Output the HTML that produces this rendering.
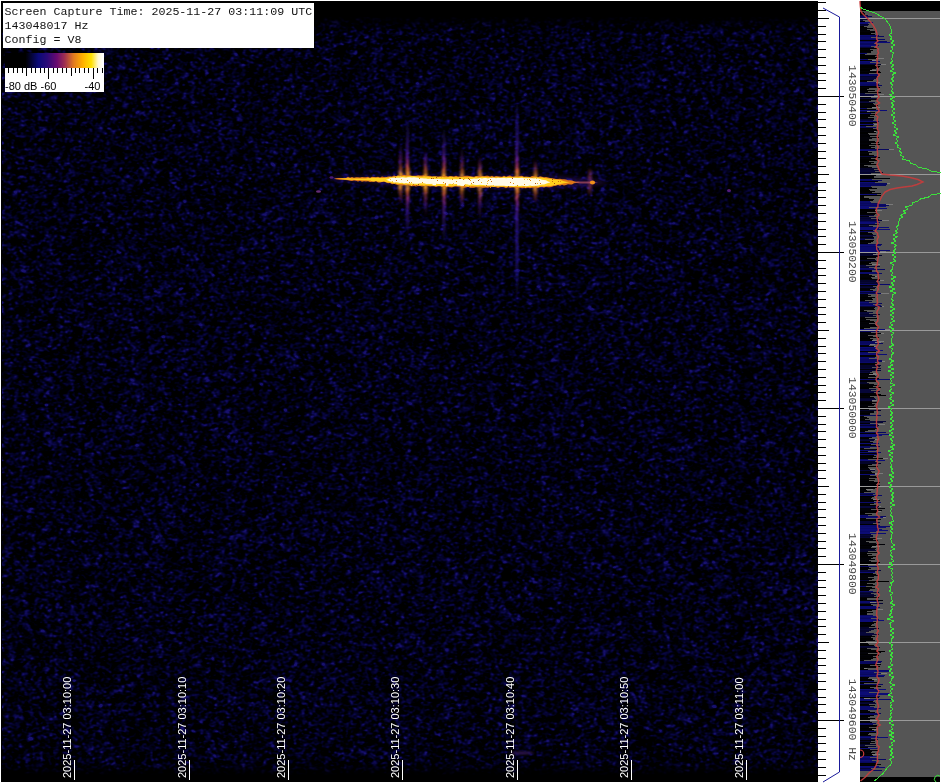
<!DOCTYPE html>
<html><head><meta charset="utf-8"><style>
html,body{margin:0;padding:0;background:#fff;width:941px;height:783px;overflow:hidden;position:relative}
</style></head><body>
<svg width="941" height="783" viewBox="0 0 941 783" style="position:absolute;left:0;top:0" shape-rendering="crispEdges">
<defs>
<filter id="nz" x="2" y="17" width="816" height="758" filterUnits="userSpaceOnUse" color-interpolation-filters="sRGB">
<feTurbulence type="fractalNoise" baseFrequency="0.24 0.3" numOctaves="1" seed="11" result="t"/>
<feColorMatrix type="matrix" in="t" values="1 0 0 0 0  1 0 0 0 0  1 0 0 0 0  0 0 0 0 1" result="a"/>
<feComponentTransfer in="a">
 <feFuncR type="linear" slope="0.14" intercept="-0.068"/>
 <feFuncG type="linear" slope="0.08" intercept="-0.04"/>
 <feFuncB type="linear" slope="1.5" intercept="-0.70"/>
 <feFuncA type="linear" slope="0" intercept="1"/>
</feComponentTransfer>
</filter>
<filter id="bl1" x="-50%" y="-50%" width="200%" height="200%"><feGaussianBlur stdDeviation="1"/></filter>
<filter id="bl2" x="-50%" y="-50%" width="200%" height="200%"><feGaussianBlur stdDeviation="2"/></filter>
<filter id="bl08" x="-10%" y="-10%" width="120%" height="120%"><feGaussianBlur stdDeviation="0.8"/></filter>
<filter id="bl05" x="-50%" y="-50%" width="200%" height="200%"><feGaussianBlur stdDeviation="0.6"/></filter>
<linearGradient id="cbar" x1="0" x2="1" y1="0" y2="0">
 <stop offset="0" stop-color="#000"/>
 <stop offset="0.21" stop-color="#000"/>
 <stop offset="0.34" stop-color="#0a0a78"/>
 <stop offset="0.43" stop-color="#2a0a78"/>
 <stop offset="0.53" stop-color="#6a0a70"/>
 <stop offset="0.61" stop-color="#a03050"/>
 <stop offset="0.70" stop-color="#e07a20"/>
 <stop offset="0.79" stop-color="#ffae00"/>
 <stop offset="0.88" stop-color="#ffe000"/>
 <stop offset="0.95" stop-color="#fff8d0"/>
 <stop offset="1" stop-color="#fff"/>
</linearGradient>

</defs>
<rect x="1" y="1" width="939" height="781" fill="#000"/>
<rect x="2" y="17" width="816" height="758" fill="#000" filter="url(#nz)"/>
</svg>
<canvas id="wf" width="816" height="758" style="position:absolute;left:2px;top:17px"></canvas>
<script>(function(){
var c=document.getElementById('wf');if(!c||!c.getContext)return;
var W=c.width,H=c.height,g=c.getContext('2d');
var im=g.createImageData(W,H),d=im.data,N=W*H;
var s=987654321;function R(){s^=s<<13;s^=s>>>17;s^=s<<5;return ((s>>>0)%1000000)/1000000;}
function K(sg){var r=Math.ceil(sg*2.5),k=[],t=0;for(var i=-r;i<=r;i++){var v=Math.exp(-i*i/(2*sg*sg));k.push(v);t+=v;}for(i=0;i<k.length;i++)k[i]/=t;return k;}
var a=new Float32Array(N),b=new Float32Array(N),i,x,y,k;
for(i=0;i<N;i++){a[i]=-Math.log(1-R()*0.999999);}
var KX=K(1.2),KY=K(0.9),rx=(KX.length-1)/2,ry=(KY.length-1)/2;
for(y=0;y<H;y++){var o=y*W;for(x=0;x<W;x++){var t=0;for(k=-rx;k<=rx;k++){var xx=x+k;if(xx<0)xx=0;if(xx>=W)xx=W-1;t+=KX[k+rx]*a[o+xx];}b[o+x]=t;}}
for(y=0;y<H;y++){var o2=y*W;for(x=0;x<W;x++){var t2=0;for(k=-ry;k<=ry;k++){var yy=y+k;if(yy<0)yy=0;if(yy>=H)yy=H-1;t2+=KY[k+ry]*b[yy*W+x];}a[o2+x]=t2;}}
var LO=0.8,HI=1.9;
for(i=0;i<N;i++){var v=(a[i]-LO)/(HI-LO);if(v<0)v=0;if(v>1.1)v=1.1;
var j=i*4;d[j]=Math.min(255,v*v*20);d[j+1]=Math.min(255,v*v*14);d[j+2]=Math.min(255,v*100);d[j+3]=255;}
g.putImageData(im,0,0);
})();
</script>
<svg width="941" height="783" viewBox="0 0 941 783" style="position:absolute;left:0;top:0" shape-rendering="crispEdges">
<defs><linearGradient id="topfade" x1="0" x2="0" y1="0" y2="1"><stop offset="0" stop-color="#000" stop-opacity="1"/><stop offset="1" stop-color="#000" stop-opacity="0"/></linearGradient></defs>
<rect x="2" y="16" width="816" height="16" fill="url(#topfade)"/>
<rect x="2" y="762" width="816" height="13" fill="url(#topfade)" transform="translate(0,1537) scale(1,-1)"/>
<g shape-rendering="auto">
<path d="M325,178.60 L327,178.27 L329,177.93 L331,177.62 L333,177.33 L335,177.04 L337,176.75 L339,176.71 L341,176.66 L343,176.62 L345,176.58 L347,176.53 L349,176.49 L351,176.44 L353,176.40 L355,176.36 L357,176.31 L359,176.27 L361,176.19 L363,176.09 L365,175.98 L367,175.87 L369,175.76 L371,175.66 L373,175.55 L375,175.44 L377,175.34 L379,175.23 L381,175.12 L383,175.02 L385,174.91 L387,174.80 L389,174.70 L391,174.59 L393,174.48 L395,174.38 L397,174.29 L399,174.21 L401,174.19 L403,174.24 L405,174.29 L407,174.34 L409,174.39 L411,174.44 L413,174.49 L415,174.54 L417,174.59 L419,174.64 L421,174.69 L423,174.74 L425,174.79 L427,174.84 L429,174.89 L431,174.94 L433,174.99 L435,175.04 L437,175.09 L439,175.14 L441,175.16 L443,175.16 L445,175.16 L447,175.15 L449,175.15 L451,175.14 L453,175.14 L455,175.14 L457,175.13 L459,175.13 L461,175.12 L463,175.12 L465,175.11 L467,175.11 L469,175.11 L471,175.10 L473,175.10 L475,175.09 L477,175.09 L479,175.09 L481,175.08 L483,175.08 L485,175.07 L487,175.07 L489,175.06 L491,175.06 L493,175.06 L495,175.05 L497,175.05 L499,175.04 L501,175.04 L503,175.04 L505,175.03 L507,175.03 L509,175.02 L511,175.02 L513,175.01 L515,175.01 L517,175.01 L519,175.00 L521,175.03 L523,175.09 L525,175.16 L527,175.22 L529,175.28 L531,175.34 L533,175.41 L535,175.47 L537,175.53 L539,175.59 L541,175.66 L543,175.72 L545,175.78 L547,175.84 L549,175.91 L551,175.97 L553,176.03 L555,176.09 L557,176.16 L559,176.22 L561,176.34 L563,176.52 L565,176.70 L567,176.88 L569,177.06 L571,177.24 L573,177.41 L575,177.59 L577,177.77 L579,177.95 L581,178.13 L583,178.31 L585,178.49 L587,178.67 L589,178.85 L591,179.03 L593,179.21 L595,179.39 L597,179.70 L599,180.14 L601,180.57 L603,181.00 L605,181.43 L607,181.86 L609,182.29 L609,182.71 L607,183.14 L605,183.57 L603,184.00 L601,184.43 L599,184.85 L597,185.27 L595,185.55 L593,185.71 L591,185.86 L589,186.01 L587,186.17 L585,186.32 L583,186.48 L581,186.63 L579,186.79 L577,186.94 L575,187.09 L573,187.25 L571,187.40 L569,187.56 L567,187.71 L565,187.86 L563,188.02 L561,188.17 L559,188.27 L557,188.31 L555,188.34 L553,188.38 L551,188.42 L549,188.46 L547,188.49 L545,188.53 L543,188.57 L541,188.61 L539,188.64 L537,188.68 L535,188.72 L533,188.76 L531,188.79 L529,188.83 L527,188.87 L525,188.91 L523,188.94 L521,188.98 L519,188.99 L517,188.96 L515,188.93 L513,188.90 L511,188.87 L509,188.84 L507,188.81 L505,188.78 L503,188.75 L501,188.72 L499,188.69 L497,188.66 L495,188.64 L493,188.61 L491,188.58 L489,188.55 L487,188.52 L485,188.49 L483,188.46 L481,188.43 L479,188.40 L477,188.37 L475,188.34 L473,188.31 L471,188.29 L469,188.26 L467,188.23 L465,188.20 L463,188.17 L461,188.14 L459,188.11 L457,188.08 L455,188.05 L453,188.02 L451,187.99 L449,187.96 L447,187.94 L445,187.91 L443,187.88 L441,187.85 L439,187.79 L437,187.71 L435,187.62 L433,187.54 L431,187.46 L429,187.38 L427,187.29 L425,187.21 L423,187.12 L421,187.04 L419,186.96 L417,186.88 L415,186.79 L413,186.71 L411,186.62 L409,186.54 L407,186.46 L405,186.38 L403,186.29 L401,186.21 L399,186.06 L397,185.84 L395,185.62 L393,185.43 L391,185.24 L389,185.05 L387,184.85 L385,184.66 L383,184.47 L381,184.27 L379,184.08 L377,183.89 L375,183.69 L373,183.50 L371,183.31 L369,183.12 L367,182.92 L365,182.73 L363,182.54 L361,182.34 L359,182.18 L357,182.05 L355,181.92 L353,181.79 L351,181.66 L349,181.53 L347,181.40 L345,181.27 L343,181.14 L341,181.01 L339,180.88 L337,180.75 L335,180.37 L333,180.00 L331,179.62 L329,179.27 L327,178.93 L325,178.60Z" fill="#4a1a90" opacity="0.35" filter="url(#bl2)"/>
<g filter="url(#bl08)"><rect x="399.2" y="143" width="2.5" height="2" fill="rgb(77,33,175)" opacity="0.05"/><rect x="399.3" y="145" width="2.5" height="2" fill="rgb(81,33,174)" opacity="0.13"/><rect x="399.4" y="147" width="2.5" height="2" fill="rgb(85,33,172)" opacity="0.20"/><rect x="399.3" y="149" width="2.5" height="2" fill="rgb(89,33,171)" opacity="0.26"/><rect x="399.6" y="151" width="2.5" height="2" fill="rgb(93,34,170)" opacity="0.32"/><rect x="399.6" y="153" width="2.5" height="2" fill="rgb(98,34,169)" opacity="0.40"/><rect x="398.8" y="155" width="3.0" height="2" fill="rgb(107,36,165)" opacity="0.49"/><rect x="399.4" y="157" width="3.0" height="2" fill="rgb(124,40,158)" opacity="0.46"/><rect x="398.7" y="159" width="3.0" height="2" fill="rgb(141,44,151)" opacity="0.55"/><rect x="399.0" y="161" width="3.0" height="2" fill="rgb(158,48,145)" opacity="0.42"/><rect x="398.8" y="163" width="3.0" height="2" fill="rgb(179,63,120)" opacity="0.43"/><rect x="399.1" y="165" width="3.0" height="2" fill="rgb(201,79,93)" opacity="0.44"/><rect x="399.3" y="167" width="3.0" height="2" fill="rgb(222,95,66)" opacity="0.62"/><rect x="398.7" y="169" width="4.0" height="2" fill="rgb(231,115,54)" opacity="0.48"/><rect x="398.2" y="171" width="4.0" height="2" fill="rgb(239,137,44)" opacity="0.60"/><rect x="398.9" y="173" width="4.0" height="2" fill="rgb(247,158,33)" opacity="0.95"/><rect x="398.9" y="175" width="4.0" height="2" fill="rgb(250,172,39)" opacity="0.73"/><rect x="398.5" y="177" width="4.0" height="2" fill="rgb(252,185,47)" opacity="0.79"/><rect x="398.8" y="179" width="4.0" height="2" fill="rgb(255,199,55)" opacity="1.00"/><rect x="398.4" y="181" width="4.0" height="2" fill="rgb(253,188,49)" opacity="0.71"/><rect x="398.4" y="183" width="4.0" height="2" fill="rgb(251,175,41)" opacity="0.83"/><rect x="398.4" y="185" width="4.0" height="2" fill="rgb(248,161,33)" opacity="0.71"/><rect x="398.1" y="187" width="4.0" height="2" fill="rgb(241,141,42)" opacity="0.87"/><rect x="398.5" y="189" width="4.0" height="2" fill="rgb(233,119,52)" opacity="0.55"/><rect x="398.4" y="191" width="4.0" height="2" fill="rgb(225,98,63)" opacity="0.40"/><rect x="399.0" y="193" width="3.0" height="2" fill="rgb(205,81,88)" opacity="0.50"/><rect x="399.4" y="195" width="3.0" height="2" fill="rgb(183,65,115)" opacity="0.34"/><rect x="399.4" y="197" width="3.0" height="2" fill="rgb(162,49,142)" opacity="0.40"/><rect x="398.8" y="199" width="3.0" height="2" fill="rgb(144,44,150)" opacity="0.23"/><rect x="399.2" y="201" width="3.0" height="2" fill="rgb(127,40,157)" opacity="0.15"/><rect x="398.7" y="203" width="3.0" height="2" fill="rgb(110,36,164)" opacity="0.06"/><rect x="406.6" y="118" width="2.5" height="2" fill="rgb(54,32,176)" opacity="0.03"/><rect x="406.1" y="120" width="2.5" height="2" fill="rgb(55,32,176)" opacity="0.12"/><rect x="406.6" y="122" width="2.5" height="2" fill="rgb(55,32,177)" opacity="0.14"/><rect x="406.4" y="124" width="2.5" height="2" fill="rgb(56,32,177)" opacity="0.23"/><rect x="405.9" y="126" width="2.5" height="2" fill="rgb(56,32,178)" opacity="0.23"/><rect x="406.2" y="128" width="2.5" height="2" fill="rgb(57,32,178)" opacity="0.36"/><rect x="406.6" y="130" width="2.5" height="2" fill="rgb(57,32,179)" opacity="0.31"/><rect x="406.5" y="132" width="2.5" height="2" fill="rgb(57,32,179)" opacity="0.45"/><rect x="406.5" y="134" width="2.5" height="2" fill="rgb(58,32,180)" opacity="0.39"/><rect x="406.5" y="136" width="2.5" height="2" fill="rgb(61,32,179)" opacity="0.42"/><rect x="406.1" y="138" width="2.5" height="2" fill="rgb(66,32,178)" opacity="0.54"/><rect x="406.6" y="140" width="2.5" height="2" fill="rgb(70,33,177)" opacity="0.59"/><rect x="406.0" y="142" width="2.5" height="2" fill="rgb(74,33,175)" opacity="0.55"/><rect x="406.0" y="144" width="2.5" height="2" fill="rgb(78,33,174)" opacity="0.65"/><rect x="406.0" y="146" width="2.5" height="2" fill="rgb(82,33,173)" opacity="0.56"/><rect x="406.0" y="148" width="2.5" height="2" fill="rgb(87,33,172)" opacity="0.56"/><rect x="406.1" y="150" width="2.5" height="2" fill="rgb(91,34,171)" opacity="0.66"/><rect x="406.1" y="152" width="2.5" height="2" fill="rgb(95,34,169)" opacity="0.81"/><rect x="406.0" y="154" width="2.5" height="2" fill="rgb(99,34,168)" opacity="0.75"/><rect x="405.6" y="156" width="3.0" height="2" fill="rgb(114,37,163)" opacity="0.71"/><rect x="405.6" y="158" width="3.0" height="2" fill="rgb(131,41,156)" opacity="0.69"/><rect x="406.0" y="160" width="3.0" height="2" fill="rgb(148,45,149)" opacity="0.86"/><rect x="406.0" y="162" width="3.0" height="2" fill="rgb(166,53,136)" opacity="0.68"/><rect x="405.7" y="164" width="3.0" height="2" fill="rgb(188,69,110)" opacity="0.94"/><rect x="405.9" y="166" width="3.0" height="2" fill="rgb(209,85,83)" opacity="0.91"/><rect x="405.8" y="168" width="4.0" height="2" fill="rgb(226,102,61)" opacity="0.80"/><rect x="405.5" y="170" width="4.0" height="2" fill="rgb(234,124,50)" opacity="0.77"/><rect x="405.9" y="172" width="4.0" height="2" fill="rgb(242,145,40)" opacity="0.89"/><rect x="405.8" y="174" width="4.0" height="2" fill="rgb(249,164,34)" opacity="0.77"/><rect x="405.6" y="176" width="4.0" height="2" fill="rgb(251,177,42)" opacity="0.90"/><rect x="405.4" y="178" width="4.0" height="2" fill="rgb(253,191,50)" opacity="0.79"/><rect x="405.2" y="180" width="4.0" height="2" fill="rgb(254,196,54)" opacity="0.67"/><rect x="405.7" y="182" width="4.0" height="2" fill="rgb(252,183,46)" opacity="0.67"/><rect x="405.2" y="184" width="4.0" height="2" fill="rgb(250,169,38)" opacity="0.74"/><rect x="405.8" y="186" width="4.0" height="2" fill="rgb(246,154,35)" opacity="0.68"/><rect x="405.6" y="188" width="4.0" height="2" fill="rgb(238,132,46)" opacity="0.93"/><rect x="405.3" y="190" width="4.0" height="2" fill="rgb(230,111,56)" opacity="0.73"/><rect x="406.0" y="192" width="3.0" height="2" fill="rgb(218,91,72)" opacity="0.73"/><rect x="406.0" y="194" width="3.0" height="2" fill="rgb(196,75,98)" opacity="0.68"/><rect x="406.4" y="196" width="3.0" height="2" fill="rgb(175,59,125)" opacity="0.71"/><rect x="406.0" y="198" width="3.0" height="2" fill="rgb(155,47,146)" opacity="0.93"/><rect x="406.4" y="200" width="3.0" height="2" fill="rgb(138,43,153)" opacity="0.68"/><rect x="405.9" y="202" width="3.0" height="2" fill="rgb(121,39,160)" opacity="0.69"/><rect x="405.9" y="204" width="3.0" height="2" fill="rgb(104,35,167)" opacity="0.58"/><rect x="406.3" y="206" width="2.5" height="2" fill="rgb(97,34,169)" opacity="0.70"/><rect x="406.3" y="208" width="2.5" height="2" fill="rgb(92,34,170)" opacity="0.60"/><rect x="406.1" y="210" width="2.5" height="2" fill="rgb(88,33,171)" opacity="0.52"/><rect x="406.2" y="212" width="2.5" height="2" fill="rgb(84,33,173)" opacity="0.51"/><rect x="405.9" y="214" width="2.5" height="2" fill="rgb(80,33,174)" opacity="0.47"/><rect x="406.0" y="216" width="2.5" height="2" fill="rgb(76,33,175)" opacity="0.50"/><rect x="406.3" y="218" width="2.5" height="2" fill="rgb(71,33,176)" opacity="0.52"/><rect x="406.4" y="220" width="2.5" height="2" fill="rgb(67,32,177)" opacity="0.50"/><rect x="406.6" y="222" width="2.5" height="2" fill="rgb(63,32,179)" opacity="0.44"/><rect x="406.1" y="224" width="2.5" height="2" fill="rgb(59,32,180)" opacity="0.33"/><rect x="406.0" y="226" width="2.5" height="2" fill="rgb(58,32,180)" opacity="0.35"/><rect x="406.4" y="228" width="2.5" height="2" fill="rgb(57,32,179)" opacity="0.25"/><rect x="406.5" y="230" width="2.5" height="2" fill="rgb(57,32,179)" opacity="0.12"/><rect x="406.4" y="232" width="2.5" height="2" fill="rgb(56,32,178)" opacity="0.09"/><rect x="424.0" y="150" width="2.5" height="2" fill="rgb(89,33,171)" opacity="0.06"/><rect x="424.3" y="152" width="2.5" height="2" fill="rgb(94,34,170)" opacity="0.16"/><rect x="424.5" y="154" width="2.5" height="2" fill="rgb(98,34,169)" opacity="0.29"/><rect x="424.1" y="156" width="3.0" height="2" fill="rgb(108,36,165)" opacity="0.38"/><rect x="424.1" y="158" width="3.0" height="2" fill="rgb(126,40,158)" opacity="0.46"/><rect x="423.8" y="160" width="3.0" height="2" fill="rgb(143,44,151)" opacity="0.49"/><rect x="423.7" y="162" width="3.0" height="2" fill="rgb(160,48,144)" opacity="0.40"/><rect x="423.7" y="164" width="3.0" height="2" fill="rgb(181,64,118)" opacity="0.50"/><rect x="424.0" y="166" width="3.0" height="2" fill="rgb(202,80,91)" opacity="0.64"/><rect x="424.1" y="168" width="3.0" height="2" fill="rgb(224,96,64)" opacity="0.61"/><rect x="423.5" y="170" width="4.0" height="2" fill="rgb(232,117,53)" opacity="0.64"/><rect x="423.7" y="172" width="4.0" height="2" fill="rgb(240,138,43)" opacity="0.48"/><rect x="423.5" y="174" width="4.0" height="2" fill="rgb(248,160,32)" opacity="0.91"/><rect x="423.6" y="176" width="4.0" height="2" fill="rgb(250,173,40)" opacity="0.84"/><rect x="423.7" y="178" width="4.0" height="2" fill="rgb(253,187,48)" opacity="0.67"/><rect x="423.2" y="180" width="4.0" height="2" fill="rgb(255,200,56)" opacity="0.74"/><rect x="423.7" y="182" width="4.0" height="2" fill="rgb(253,187,48)" opacity="0.74"/><rect x="423.7" y="184" width="4.0" height="2" fill="rgb(250,173,40)" opacity="0.72"/><rect x="423.5" y="186" width="4.0" height="2" fill="rgb(248,160,32)" opacity="0.99"/><rect x="423.5" y="188" width="4.0" height="2" fill="rgb(240,139,43)" opacity="0.77"/><rect x="423.7" y="190" width="4.0" height="2" fill="rgb(232,118,53)" opacity="0.65"/><rect x="423.6" y="192" width="4.0" height="2" fill="rgb(224,96,64)" opacity="0.62"/><rect x="423.7" y="194" width="3.0" height="2" fill="rgb(203,80,90)" opacity="0.47"/><rect x="424.2" y="196" width="3.0" height="2" fill="rgb(182,64,117)" opacity="0.50"/><rect x="424.1" y="198" width="3.0" height="2" fill="rgb(160,48,144)" opacity="0.49"/><rect x="423.6" y="200" width="3.0" height="2" fill="rgb(143,44,151)" opacity="0.40"/><rect x="424.1" y="202" width="3.0" height="2" fill="rgb(126,40,158)" opacity="0.42"/><rect x="424.1" y="204" width="3.0" height="2" fill="rgb(109,36,165)" opacity="0.45"/><rect x="424.3" y="206" width="2.5" height="2" fill="rgb(98,34,169)" opacity="0.33"/><rect x="424.2" y="208" width="2.5" height="2" fill="rgb(94,34,170)" opacity="0.29"/><rect x="424.6" y="210" width="2.5" height="2" fill="rgb(90,34,171)" opacity="0.19"/><rect x="424.6" y="212" width="2.5" height="2" fill="rgb(85,33,172)" opacity="0.12"/><rect x="423.9" y="214" width="2.5" height="2" fill="rgb(81,33,173)" opacity="0.06"/><rect x="443.0" y="128" width="2.5" height="2" fill="rgb(56,32,178)" opacity="0.04"/><rect x="442.7" y="130" width="2.5" height="2" fill="rgb(57,32,179)" opacity="0.14"/><rect x="442.5" y="132" width="2.5" height="2" fill="rgb(57,32,179)" opacity="0.17"/><rect x="442.5" y="134" width="2.5" height="2" fill="rgb(58,32,180)" opacity="0.31"/><rect x="442.5" y="136" width="2.5" height="2" fill="rgb(59,32,180)" opacity="0.34"/><rect x="443.1" y="138" width="2.5" height="2" fill="rgb(63,32,179)" opacity="0.39"/><rect x="443.0" y="140" width="2.5" height="2" fill="rgb(67,32,177)" opacity="0.37"/><rect x="443.1" y="142" width="2.5" height="2" fill="rgb(72,33,176)" opacity="0.49"/><rect x="442.5" y="144" width="2.5" height="2" fill="rgb(76,33,175)" opacity="0.58"/><rect x="442.7" y="146" width="2.5" height="2" fill="rgb(80,33,174)" opacity="0.67"/><rect x="442.4" y="148" width="2.5" height="2" fill="rgb(84,33,173)" opacity="0.49"/><rect x="442.7" y="150" width="2.5" height="2" fill="rgb(88,33,171)" opacity="0.65"/><rect x="442.5" y="152" width="2.5" height="2" fill="rgb(93,34,170)" opacity="0.62"/><rect x="442.6" y="154" width="2.5" height="2" fill="rgb(97,34,169)" opacity="0.66"/><rect x="442.1" y="156" width="3.0" height="2" fill="rgb(104,35,166)" opacity="0.83"/><rect x="442.8" y="158" width="3.0" height="2" fill="rgb(121,39,160)" opacity="0.83"/><rect x="442.8" y="160" width="3.0" height="2" fill="rgb(138,43,153)" opacity="0.64"/><rect x="442.8" y="162" width="3.0" height="2" fill="rgb(155,47,146)" opacity="0.84"/><rect x="442.4" y="164" width="3.0" height="2" fill="rgb(176,60,124)" opacity="0.71"/><rect x="442.9" y="166" width="3.0" height="2" fill="rgb(197,76,98)" opacity="0.75"/><rect x="442.4" y="168" width="3.0" height="2" fill="rgb(218,92,71)" opacity="0.83"/><rect x="441.8" y="170" width="4.0" height="2" fill="rgb(230,112,56)" opacity="0.78"/><rect x="441.7" y="172" width="4.0" height="2" fill="rgb(238,133,45)" opacity="0.65"/><rect x="441.8" y="174" width="4.0" height="2" fill="rgb(246,154,35)" opacity="0.94"/><rect x="441.8" y="176" width="4.0" height="2" fill="rgb(250,170,38)" opacity="0.98"/><rect x="442.0" y="178" width="4.0" height="2" fill="rgb(252,183,46)" opacity="0.74"/><rect x="441.9" y="180" width="4.0" height="2" fill="rgb(254,196,54)" opacity="0.72"/><rect x="442.3" y="182" width="4.0" height="2" fill="rgb(253,190,50)" opacity="0.98"/><rect x="442.1" y="184" width="4.0" height="2" fill="rgb(251,177,42)" opacity="0.93"/><rect x="442.4" y="186" width="4.0" height="2" fill="rgb(249,164,34)" opacity="0.97"/><rect x="442.2" y="188" width="4.0" height="2" fill="rgb(242,144,40)" opacity="0.84"/><rect x="442.2" y="190" width="4.0" height="2" fill="rgb(234,123,51)" opacity="0.65"/><rect x="442.2" y="192" width="4.0" height="2" fill="rgb(226,102,61)" opacity="0.78"/><rect x="442.3" y="194" width="3.0" height="2" fill="rgb(208,84,84)" opacity="0.85"/><rect x="442.8" y="196" width="3.0" height="2" fill="rgb(187,68,110)" opacity="0.64"/><rect x="442.5" y="198" width="3.0" height="2" fill="rgb(166,52,137)" opacity="0.66"/><rect x="442.3" y="200" width="3.0" height="2" fill="rgb(147,45,149)" opacity="0.73"/><rect x="442.9" y="202" width="3.0" height="2" fill="rgb(130,41,156)" opacity="0.85"/><rect x="442.6" y="204" width="3.0" height="2" fill="rgb(113,37,163)" opacity="0.68"/><rect x="442.8" y="206" width="2.5" height="2" fill="rgb(99,34,168)" opacity="0.68"/><rect x="442.5" y="208" width="2.5" height="2" fill="rgb(95,34,169)" opacity="0.70"/><rect x="442.5" y="210" width="2.5" height="2" fill="rgb(91,34,171)" opacity="0.61"/><rect x="442.7" y="212" width="2.5" height="2" fill="rgb(86,33,172)" opacity="0.81"/><rect x="443.1" y="214" width="2.5" height="2" fill="rgb(82,33,173)" opacity="0.58"/><rect x="442.7" y="216" width="2.5" height="2" fill="rgb(78,33,174)" opacity="0.77"/><rect x="442.5" y="218" width="2.5" height="2" fill="rgb(74,33,175)" opacity="0.51"/><rect x="442.6" y="220" width="2.5" height="2" fill="rgb(70,33,177)" opacity="0.47"/><rect x="442.5" y="222" width="2.5" height="2" fill="rgb(65,32,178)" opacity="0.44"/><rect x="442.8" y="224" width="2.5" height="2" fill="rgb(61,32,179)" opacity="0.45"/><rect x="442.9" y="226" width="2.5" height="2" fill="rgb(58,32,180)" opacity="0.53"/><rect x="442.7" y="228" width="2.5" height="2" fill="rgb(57,32,179)" opacity="0.40"/><rect x="442.7" y="230" width="2.5" height="2" fill="rgb(57,32,179)" opacity="0.37"/><rect x="442.4" y="232" width="2.5" height="2" fill="rgb(57,32,178)" opacity="0.29"/><rect x="443.1" y="234" width="2.5" height="2" fill="rgb(56,32,178)" opacity="0.23"/><rect x="442.8" y="236" width="2.5" height="2" fill="rgb(56,32,177)" opacity="0.17"/><rect x="443.0" y="238" width="2.5" height="2" fill="rgb(55,32,177)" opacity="0.14"/><rect x="442.6" y="240" width="2.5" height="2" fill="rgb(55,32,176)" opacity="0.06"/><rect x="460.7" y="148" width="2.5" height="2" fill="rgb(84,33,173)" opacity="0.04"/><rect x="461.0" y="150" width="2.5" height="2" fill="rgb(88,33,171)" opacity="0.15"/><rect x="460.4" y="152" width="2.5" height="2" fill="rgb(92,34,170)" opacity="0.23"/><rect x="460.9" y="154" width="2.5" height="2" fill="rgb(97,34,169)" opacity="0.21"/><rect x="460.5" y="156" width="3.0" height="2" fill="rgb(103,35,167)" opacity="0.37"/><rect x="460.1" y="158" width="3.0" height="2" fill="rgb(120,39,160)" opacity="0.38"/><rect x="460.8" y="160" width="3.0" height="2" fill="rgb(137,43,153)" opacity="0.38"/><rect x="460.8" y="162" width="3.0" height="2" fill="rgb(155,47,146)" opacity="0.49"/><rect x="460.3" y="164" width="3.0" height="2" fill="rgb(175,59,126)" opacity="0.55"/><rect x="460.2" y="166" width="3.0" height="2" fill="rgb(196,75,99)" opacity="0.40"/><rect x="460.6" y="168" width="3.0" height="2" fill="rgb(217,91,72)" opacity="0.50"/><rect x="460.2" y="170" width="4.0" height="2" fill="rgb(229,111,57)" opacity="0.60"/><rect x="460.2" y="172" width="4.0" height="2" fill="rgb(237,132,46)" opacity="0.55"/><rect x="460.0" y="174" width="4.0" height="2" fill="rgb(245,153,35)" opacity="0.80"/><rect x="460.2" y="176" width="4.0" height="2" fill="rgb(250,169,37)" opacity="0.66"/><rect x="460.3" y="178" width="4.0" height="2" fill="rgb(252,182,45)" opacity="0.73"/><rect x="459.8" y="180" width="4.0" height="2" fill="rgb(254,196,53)" opacity="0.88"/><rect x="459.8" y="182" width="4.0" height="2" fill="rgb(253,191,51)" opacity="0.69"/><rect x="460.2" y="184" width="4.0" height="2" fill="rgb(251,178,43)" opacity="0.87"/><rect x="459.7" y="186" width="4.0" height="2" fill="rgb(249,164,35)" opacity="0.68"/><rect x="460.1" y="188" width="4.0" height="2" fill="rgb(243,145,39)" opacity="0.82"/><rect x="459.8" y="190" width="4.0" height="2" fill="rgb(235,124,50)" opacity="0.47"/><rect x="459.6" y="192" width="4.0" height="2" fill="rgb(227,103,61)" opacity="0.50"/><rect x="460.5" y="194" width="3.0" height="2" fill="rgb(209,85,82)" opacity="0.42"/><rect x="460.6" y="196" width="3.0" height="2" fill="rgb(188,69,109)" opacity="0.50"/><rect x="460.5" y="198" width="3.0" height="2" fill="rgb(167,53,136)" opacity="0.43"/><rect x="460.3" y="200" width="3.0" height="2" fill="rgb(148,45,149)" opacity="0.28"/><rect x="460.7" y="202" width="3.0" height="2" fill="rgb(131,41,156)" opacity="0.29"/><rect x="460.1" y="204" width="3.0" height="2" fill="rgb(114,37,162)" opacity="0.15"/><rect x="460.9" y="206" width="2.5" height="2" fill="rgb(99,34,168)" opacity="0.06"/><rect x="478.3" y="156" width="3.0" height="2" fill="rgb(102,34,167)" opacity="0.06"/><rect x="478.8" y="158" width="3.0" height="2" fill="rgb(119,38,160)" opacity="0.19"/><rect x="478.1" y="160" width="3.0" height="2" fill="rgb(136,42,153)" opacity="0.24"/><rect x="478.4" y="162" width="3.0" height="2" fill="rgb(154,46,147)" opacity="0.33"/><rect x="478.3" y="164" width="3.0" height="2" fill="rgb(173,58,127)" opacity="0.44"/><rect x="478.7" y="166" width="3.0" height="2" fill="rgb(195,74,101)" opacity="0.52"/><rect x="478.3" y="168" width="3.0" height="2" fill="rgb(216,90,74)" opacity="0.50"/><rect x="477.8" y="170" width="4.0" height="2" fill="rgb(229,109,57)" opacity="0.63"/><rect x="477.8" y="172" width="4.0" height="2" fill="rgb(237,131,47)" opacity="0.62"/><rect x="478.2" y="174" width="4.0" height="2" fill="rgb(245,152,36)" opacity="0.71"/><rect x="478.4" y="176" width="4.0" height="2" fill="rgb(249,168,37)" opacity="0.75"/><rect x="477.7" y="178" width="4.0" height="2" fill="rgb(252,182,45)" opacity="0.82"/><rect x="477.9" y="180" width="4.0" height="2" fill="rgb(254,195,53)" opacity="0.73"/><rect x="478.4" y="182" width="4.0" height="2" fill="rgb(254,192,51)" opacity="0.88"/><rect x="477.9" y="184" width="4.0" height="2" fill="rgb(251,178,43)" opacity="0.70"/><rect x="478.4" y="186" width="4.0" height="2" fill="rgb(249,165,35)" opacity="0.72"/><rect x="477.6" y="188" width="4.0" height="2" fill="rgb(243,147,39)" opacity="0.69"/><rect x="477.9" y="190" width="4.0" height="2" fill="rgb(235,125,49)" opacity="0.46"/><rect x="478.3" y="192" width="4.0" height="2" fill="rgb(227,104,60)" opacity="0.65"/><rect x="478.9" y="194" width="3.0" height="2" fill="rgb(211,86,81)" opacity="0.60"/><rect x="478.4" y="196" width="3.0" height="2" fill="rgb(189,70,107)" opacity="0.63"/><rect x="478.8" y="198" width="3.0" height="2" fill="rgb(168,54,134)" opacity="0.45"/><rect x="478.1" y="200" width="3.0" height="2" fill="rgb(149,46,148)" opacity="0.55"/><rect x="478.4" y="202" width="3.0" height="2" fill="rgb(132,42,155)" opacity="0.50"/><rect x="478.4" y="204" width="3.0" height="2" fill="rgb(115,38,162)" opacity="0.42"/><rect x="478.4" y="206" width="2.5" height="2" fill="rgb(99,34,168)" opacity="0.35"/><rect x="478.6" y="208" width="2.5" height="2" fill="rgb(95,34,169)" opacity="0.33"/><rect x="478.4" y="210" width="2.5" height="2" fill="rgb(91,34,171)" opacity="0.37"/><rect x="478.5" y="212" width="2.5" height="2" fill="rgb(87,33,172)" opacity="0.30"/><rect x="479.0" y="214" width="2.5" height="2" fill="rgb(83,33,173)" opacity="0.18"/><rect x="478.7" y="216" width="2.5" height="2" fill="rgb(78,33,174)" opacity="0.14"/><rect x="478.7" y="218" width="2.5" height="2" fill="rgb(74,33,175)" opacity="0.03"/><rect x="515.5" y="101" width="2.5" height="2" fill="rgb(50,32,171)" opacity="0.09"/><rect x="516.1" y="103" width="2.5" height="2" fill="rgb(51,32,171)" opacity="0.12"/><rect x="515.7" y="105" width="2.5" height="2" fill="rgb(51,32,172)" opacity="0.14"/><rect x="516.0" y="107" width="2.5" height="2" fill="rgb(52,32,172)" opacity="0.24"/><rect x="515.4" y="109" width="2.5" height="2" fill="rgb(52,32,173)" opacity="0.21"/><rect x="516.1" y="111" width="2.5" height="2" fill="rgb(52,32,173)" opacity="0.24"/><rect x="515.9" y="113" width="2.5" height="2" fill="rgb(53,32,174)" opacity="0.30"/><rect x="515.6" y="115" width="2.5" height="2" fill="rgb(53,32,174)" opacity="0.43"/><rect x="516.1" y="117" width="2.5" height="2" fill="rgb(54,32,175)" opacity="0.37"/><rect x="515.6" y="119" width="2.5" height="2" fill="rgb(54,32,175)" opacity="0.46"/><rect x="515.6" y="121" width="2.5" height="2" fill="rgb(55,32,176)" opacity="0.51"/><rect x="515.4" y="123" width="2.5" height="2" fill="rgb(55,32,177)" opacity="0.45"/><rect x="516.1" y="125" width="2.5" height="2" fill="rgb(56,32,177)" opacity="0.59"/><rect x="516.1" y="127" width="2.5" height="2" fill="rgb(56,32,178)" opacity="0.59"/><rect x="515.5" y="129" width="2.5" height="2" fill="rgb(56,32,178)" opacity="0.46"/><rect x="516.1" y="131" width="2.5" height="2" fill="rgb(57,32,179)" opacity="0.60"/><rect x="515.7" y="133" width="2.5" height="2" fill="rgb(57,32,179)" opacity="0.75"/><rect x="515.7" y="135" width="2.5" height="2" fill="rgb(58,32,180)" opacity="0.58"/><rect x="516.1" y="137" width="2.5" height="2" fill="rgb(60,32,179)" opacity="0.67"/><rect x="516.0" y="139" width="2.5" height="2" fill="rgb(64,32,178)" opacity="0.60"/><rect x="516.0" y="141" width="2.5" height="2" fill="rgb(69,33,177)" opacity="0.78"/><rect x="515.8" y="143" width="2.5" height="2" fill="rgb(73,33,176)" opacity="0.81"/><rect x="515.6" y="145" width="2.5" height="2" fill="rgb(77,33,175)" opacity="0.68"/><rect x="516.0" y="147" width="2.5" height="2" fill="rgb(81,33,173)" opacity="0.71"/><rect x="515.5" y="149" width="2.5" height="2" fill="rgb(85,33,172)" opacity="0.63"/><rect x="515.5" y="151" width="2.5" height="2" fill="rgb(90,34,171)" opacity="0.86"/><rect x="515.4" y="153" width="2.5" height="2" fill="rgb(94,34,170)" opacity="0.64"/><rect x="515.6" y="155" width="2.5" height="2" fill="rgb(98,34,169)" opacity="0.82"/><rect x="515.8" y="157" width="3.0" height="2" fill="rgb(109,36,165)" opacity="0.97"/><rect x="515.3" y="159" width="3.0" height="2" fill="rgb(126,40,158)" opacity="0.98"/><rect x="515.2" y="161" width="3.0" height="2" fill="rgb(143,44,151)" opacity="0.67"/><rect x="515.7" y="163" width="3.0" height="2" fill="rgb(160,48,144)" opacity="0.82"/><rect x="515.3" y="165" width="3.0" height="2" fill="rgb(182,64,117)" opacity="0.80"/><rect x="515.6" y="167" width="3.0" height="2" fill="rgb(203,80,90)" opacity="0.79"/><rect x="515.2" y="169" width="4.0" height="2" fill="rgb(224,96,64)" opacity="0.88"/><rect x="515.1" y="171" width="4.0" height="2" fill="rgb(232,118,53)" opacity="0.94"/><rect x="515.3" y="173" width="4.0" height="2" fill="rgb(240,139,43)" opacity="0.69"/><rect x="515.1" y="175" width="4.0" height="2" fill="rgb(248,160,32)" opacity="0.75"/><rect x="515.2" y="177" width="4.0" height="2" fill="rgb(250,173,40)" opacity="0.78"/><rect x="514.8" y="179" width="4.0" height="2" fill="rgb(253,187,48)" opacity="0.72"/><rect x="514.7" y="181" width="4.0" height="2" fill="rgb(255,200,56)" opacity="0.74"/><rect x="515.1" y="183" width="4.0" height="2" fill="rgb(253,187,48)" opacity="0.96"/><rect x="514.9" y="185" width="4.0" height="2" fill="rgb(250,173,40)" opacity="0.76"/><rect x="515.0" y="187" width="4.0" height="2" fill="rgb(248,160,32)" opacity="1.00"/><rect x="515.2" y="189" width="4.0" height="2" fill="rgb(240,138,43)" opacity="0.73"/><rect x="515.4" y="191" width="4.0" height="2" fill="rgb(232,117,53)" opacity="0.88"/><rect x="515.5" y="193" width="3.0" height="2" fill="rgb(224,96,64)" opacity="0.69"/><rect x="515.8" y="195" width="3.0" height="2" fill="rgb(202,80,91)" opacity="0.94"/><rect x="515.1" y="197" width="3.0" height="2" fill="rgb(181,64,118)" opacity="0.97"/><rect x="515.2" y="199" width="3.0" height="2" fill="rgb(160,48,144)" opacity="0.75"/><rect x="515.9" y="201" width="3.0" height="2" fill="rgb(143,44,151)" opacity="0.71"/><rect x="515.8" y="203" width="3.0" height="2" fill="rgb(126,40,158)" opacity="0.85"/><rect x="515.8" y="205" width="3.0" height="2" fill="rgb(108,36,165)" opacity="0.77"/><rect x="515.6" y="207" width="2.5" height="2" fill="rgb(98,34,169)" opacity="0.80"/><rect x="516.1" y="209" width="2.5" height="2" fill="rgb(94,34,170)" opacity="0.90"/><rect x="515.8" y="211" width="2.5" height="2" fill="rgb(89,33,171)" opacity="0.67"/><rect x="515.5" y="213" width="2.5" height="2" fill="rgb(85,33,172)" opacity="0.84"/><rect x="515.5" y="215" width="2.5" height="2" fill="rgb(81,33,173)" opacity="0.75"/><rect x="515.6" y="217" width="2.5" height="2" fill="rgb(77,33,175)" opacity="0.68"/><rect x="515.9" y="219" width="2.5" height="2" fill="rgb(73,33,176)" opacity="0.81"/><rect x="515.4" y="221" width="2.5" height="2" fill="rgb(68,32,177)" opacity="0.67"/><rect x="515.9" y="223" width="2.5" height="2" fill="rgb(64,32,178)" opacity="0.70"/><rect x="515.6" y="225" width="2.5" height="2" fill="rgb(60,32,179)" opacity="0.65"/><rect x="516.0" y="227" width="2.5" height="2" fill="rgb(58,32,180)" opacity="0.65"/><rect x="515.4" y="229" width="2.5" height="2" fill="rgb(57,32,179)" opacity="0.75"/><rect x="515.7" y="231" width="2.5" height="2" fill="rgb(57,32,179)" opacity="0.60"/><rect x="515.9" y="233" width="2.5" height="2" fill="rgb(56,32,178)" opacity="0.73"/><rect x="515.5" y="235" width="2.5" height="2" fill="rgb(56,32,178)" opacity="0.58"/><rect x="515.7" y="237" width="2.5" height="2" fill="rgb(56,32,177)" opacity="0.75"/><rect x="515.6" y="239" width="2.5" height="2" fill="rgb(55,32,177)" opacity="0.62"/><rect x="515.6" y="241" width="2.5" height="2" fill="rgb(55,32,176)" opacity="0.80"/><rect x="515.6" y="243" width="2.5" height="2" fill="rgb(54,32,175)" opacity="0.67"/><rect x="516.0" y="245" width="2.5" height="2" fill="rgb(54,32,175)" opacity="0.62"/><rect x="515.6" y="247" width="2.5" height="2" fill="rgb(53,32,174)" opacity="0.76"/><rect x="515.9" y="249" width="2.5" height="2" fill="rgb(53,32,174)" opacity="0.54"/><rect x="515.4" y="251" width="2.5" height="2" fill="rgb(52,32,173)" opacity="0.53"/><rect x="515.7" y="253" width="2.5" height="2" fill="rgb(52,32,173)" opacity="0.69"/><rect x="515.7" y="255" width="2.5" height="2" fill="rgb(52,32,172)" opacity="0.65"/><rect x="515.7" y="257" width="2.5" height="2" fill="rgb(51,32,172)" opacity="0.65"/><rect x="515.4" y="259" width="2.5" height="2" fill="rgb(51,32,171)" opacity="0.46"/><rect x="515.9" y="261" width="2.5" height="2" fill="rgb(50,32,171)" opacity="0.53"/><rect x="515.4" y="263" width="2.5" height="2" fill="rgb(50,32,170)" opacity="0.59"/><rect x="515.6" y="265" width="2.5" height="2" fill="rgb(49,32,170)" opacity="0.51"/><rect x="515.5" y="267" width="2.5" height="2" fill="rgb(49,32,169)" opacity="0.47"/><rect x="515.8" y="269" width="2.5" height="2" fill="rgb(48,32,169)" opacity="0.41"/><rect x="515.4" y="271" width="2.5" height="2" fill="rgb(48,32,168)" opacity="0.50"/><rect x="516.0" y="273" width="2.5" height="2" fill="rgb(48,32,168)" opacity="0.40"/><rect x="515.5" y="275" width="2.5" height="2" fill="rgb(48,32,168)" opacity="0.46"/><rect x="516.1" y="277" width="2.5" height="2" fill="rgb(48,32,168)" opacity="0.31"/><rect x="515.7" y="279" width="2.5" height="2" fill="rgb(48,32,167)" opacity="0.41"/><rect x="516.1" y="281" width="2.5" height="2" fill="rgb(47,32,167)" opacity="0.26"/><rect x="516.1" y="283" width="2.5" height="2" fill="rgb(47,32,167)" opacity="0.28"/><rect x="516.0" y="285" width="2.5" height="2" fill="rgb(47,31,167)" opacity="0.28"/><rect x="516.0" y="287" width="2.5" height="2" fill="rgb(47,31,167)" opacity="0.21"/><rect x="515.7" y="289" width="2.5" height="2" fill="rgb(47,31,167)" opacity="0.19"/><rect x="516.0" y="291" width="2.5" height="2" fill="rgb(47,31,167)" opacity="0.22"/><rect x="515.5" y="293" width="2.5" height="2" fill="rgb(47,31,166)" opacity="0.14"/><rect x="515.8" y="295" width="2.5" height="2" fill="rgb(47,31,166)" opacity="0.13"/><rect x="515.4" y="297" width="2.5" height="2" fill="rgb(47,31,166)" opacity="0.10"/><rect x="515.9" y="299" width="2.5" height="2" fill="rgb(46,31,166)" opacity="0.07"/><rect x="515.4" y="301" width="2.5" height="2" fill="rgb(46,31,166)" opacity="0.06"/><rect x="533.6" y="160" width="3.0" height="2" fill="rgb(133,42,155)" opacity="0.08"/><rect x="533.7" y="162" width="3.0" height="2" fill="rgb(151,46,148)" opacity="0.23"/><rect x="534.0" y="164" width="3.0" height="2" fill="rgb(170,55,132)" opacity="0.32"/><rect x="533.8" y="166" width="3.0" height="2" fill="rgb(191,71,105)" opacity="0.41"/><rect x="534.1" y="168" width="3.0" height="2" fill="rgb(212,87,79)" opacity="0.44"/><rect x="533.6" y="170" width="4.0" height="2" fill="rgb(228,106,59)" opacity="0.48"/><rect x="533.5" y="172" width="4.0" height="2" fill="rgb(236,127,49)" opacity="0.52"/><rect x="533.6" y="174" width="4.0" height="2" fill="rgb(244,148,38)" opacity="0.64"/><rect x="533.3" y="176" width="4.0" height="2" fill="rgb(249,166,36)" opacity="0.81"/><rect x="533.7" y="178" width="4.0" height="2" fill="rgb(251,179,44)" opacity="0.91"/><rect x="533.2" y="180" width="4.0" height="2" fill="rgb(254,193,52)" opacity="0.81"/><rect x="533.2" y="182" width="4.0" height="2" fill="rgb(254,194,52)" opacity="0.82"/><rect x="533.4" y="184" width="4.0" height="2" fill="rgb(252,181,44)" opacity="0.69"/><rect x="533.5" y="186" width="4.0" height="2" fill="rgb(249,167,36)" opacity="0.67"/><rect x="533.1" y="188" width="4.0" height="2" fill="rgb(244,150,37)" opacity="0.80"/><rect x="533.2" y="190" width="4.0" height="2" fill="rgb(236,129,47)" opacity="0.56"/><rect x="533.7" y="192" width="4.0" height="2" fill="rgb(228,108,58)" opacity="0.54"/><rect x="533.6" y="194" width="3.0" height="2" fill="rgb(214,89,76)" opacity="0.44"/><rect x="533.9" y="196" width="3.0" height="2" fill="rgb(193,73,103)" opacity="0.36"/><rect x="533.7" y="198" width="3.0" height="2" fill="rgb(172,57,129)" opacity="0.32"/><rect x="534.4" y="200" width="3.0" height="2" fill="rgb(152,46,147)" opacity="0.17"/><rect x="588.3" y="168" width="3.0" height="2" fill="rgb(192,72,104)" opacity="0.09"/><rect x="588.0" y="170" width="4.0" height="2" fill="rgb(192,72,104)" opacity="0.26"/><rect x="588.3" y="172" width="4.0" height="2" fill="rgb(192,72,104)" opacity="0.37"/><rect x="588.2" y="174" width="4.0" height="2" fill="rgb(192,72,104)" opacity="0.32"/><rect x="587.7" y="176" width="4.0" height="2" fill="rgb(192,72,104)" opacity="0.48"/><rect x="588.2" y="178" width="4.0" height="2" fill="rgb(192,72,104)" opacity="0.39"/><rect x="588.3" y="180" width="4.0" height="2" fill="rgb(192,72,104)" opacity="0.36"/><rect x="588.3" y="182" width="4.0" height="2" fill="rgb(192,72,104)" opacity="0.39"/><rect x="588.0" y="184" width="4.0" height="2" fill="rgb(192,72,104)" opacity="0.36"/><rect x="587.8" y="186" width="4.0" height="2" fill="rgb(192,72,104)" opacity="0.48"/><rect x="588.0" y="188" width="4.0" height="2" fill="rgb(192,72,104)" opacity="0.34"/><rect x="587.6" y="190" width="4.0" height="2" fill="rgb(192,72,104)" opacity="0.29"/><rect x="587.7" y="192" width="4.0" height="2" fill="rgb(192,72,104)" opacity="0.19"/><rect x="588.6" y="194" width="3.0" height="2" fill="rgb(192,72,104)" opacity="0.10"/></g>
<path d="M334,178.69 L336,178.20 L338,177.95 L340,177.95 L342,177.95 L344,177.95 L346,177.95 L348,176.87 L350,177.75 L352,177.01 L354,177.81 L356,177.31 L358,177.18 L360,177.51 L362,176.89 L364,177.25 L366,177.21 L368,176.84 L370,177.76 L372,176.68 L374,177.10 L376,177.37 L378,176.87 L380,177.50 L382,176.62 L384,177.10 L386,177.20 L388,176.41 L390,176.49 L392,176.50 L394,175.51 L396,176.16 L398,175.17 L400,175.78 L402,175.25 L404,174.77 L406,175.18 L408,175.02 L410,175.37 L412,175.81 L414,175.84 L416,175.77 L418,175.28 L420,175.56 L422,175.53 L424,175.14 L426,176.12 L428,176.08 L430,175.63 L432,176.46 L434,176.55 L436,176.19 L438,176.56 L440,176.32 L442,176.48 L444,176.05 L446,176.04 L448,176.50 L450,176.00 L452,176.18 L454,176.59 L456,175.63 L458,176.46 L460,176.57 L462,176.64 L464,175.98 L466,175.70 L468,175.81 L470,176.27 L472,176.43 L474,176.74 L476,175.98 L478,176.08 L480,176.33 L482,175.98 L484,176.22 L486,175.63 L488,175.87 L490,176.45 L492,175.67 L494,176.70 L496,176.11 L498,176.26 L500,176.46 L502,176.68 L504,175.82 L506,176.74 L508,176.09 L510,175.62 L512,176.58 L514,176.51 L516,176.02 L518,176.14 L520,175.98 L522,175.84 L524,176.67 L526,176.57 L528,176.64 L530,177.00 L532,176.06 L534,176.25 L536,176.39 L538,177.30 L540,176.36 L542,176.66 L544,177.18 L546,177.02 L548,177.55 L550,178.00 L552,178.32 L554,178.48 L556,179.03 L558,178.98 L560,178.80 L562,179.18 L564,179.20 L566,179.56 L568,180.30 L570,180.16 L572,180.50 L574,181.36 L576,181.70 L578,182.04 L580,182.38 L580,182.38 L578,182.69 L576,183.00 L574,183.31 L572,184.57 L570,184.43 L568,184.30 L566,184.93 L564,185.49 L562,184.77 L560,185.86 L558,185.11 L556,185.69 L554,185.95 L552,186.84 L550,187.24 L548,187.15 L546,186.80 L544,187.62 L542,187.12 L540,187.16 L538,188.00 L536,187.71 L534,187.82 L532,187.82 L530,188.24 L528,187.66 L526,188.15 L524,188.01 L522,188.24 L520,187.77 L518,188.09 L516,187.88 L514,187.54 L512,187.40 L510,187.87 L508,187.19 L506,188.17 L504,187.22 L502,187.06 L500,187.13 L498,188.09 L496,187.36 L494,187.10 L492,186.93 L490,186.92 L488,187.68 L486,187.59 L484,187.64 L482,187.66 L480,186.83 L478,187.43 L476,187.14 L474,187.66 L472,187.63 L470,187.69 L468,186.68 L466,187.62 L464,187.65 L462,187.66 L460,186.63 L458,186.72 L456,186.58 L454,186.47 L452,187.42 L450,187.35 L448,187.11 L446,187.32 L444,187.06 L442,186.62 L440,186.37 L438,186.30 L436,187.03 L434,186.30 L432,186.37 L430,186.43 L428,185.88 L426,186.09 L424,186.06 L422,186.51 L420,186.02 L418,185.90 L416,186.61 L414,185.99 L412,186.34 L410,185.99 L408,185.09 L406,185.35 L404,185.17 L402,185.38 L400,184.67 L398,184.90 L396,184.50 L394,183.81 L392,184.20 L390,182.88 L388,183.36 L386,182.19 L384,181.74 L382,181.88 L380,182.45 L378,182.61 L376,181.34 L374,181.83 L372,181.73 L370,182.00 L368,181.16 L366,181.44 L364,181.16 L362,181.64 L360,180.86 L358,181.59 L356,180.71 L354,180.54 L352,181.04 L350,180.71 L348,180.16 L346,179.94 L344,179.85 L342,179.77 L340,179.68 L338,179.59 L336,179.26 L334,178.69Z" fill="#e07818" filter="url(#bl05)"/>
<path d="M574,182.34 L576,181.85 L578,181.36 L580,181.38 L582,181.39 L584,181.40 L586,181.41 L588,181.43 L590,181.44 L592,181.70 L594,181.96 L596,182.22 L598,182.49 L598,182.49 L596,182.72 L594,182.96 L592,183.20 L590,183.44 L588,183.43 L586,183.41 L584,183.40 L582,183.39 L580,183.38 L578,183.36 L576,182.85 L574,182.34Z" fill="#b05060" opacity="0.7" filter="url(#bl05)"/>
<path d="M338,178.77 L340,178.64 L342,178.52 L344,178.39 L346,178.33 L348,178.35 L350,178.36 L352,178.38 L354,178.40 L356,178.41 L358,178.43 L360,178.45 L362,178.43 L364,178.42 L366,178.41 L368,177.89 L370,178.32 L372,177.74 L374,177.80 L376,177.71 L378,177.83 L380,178.03 L382,177.98 L384,177.98 L386,177.42 L388,177.76 L390,176.81 L392,177.19 L394,176.74 L396,176.52 L398,175.98 L400,176.27 L402,176.33 L404,175.89 L406,176.38 L408,176.16 L410,176.07 L412,175.96 L414,176.02 L416,176.16 L418,176.46 L420,176.54 L422,176.73 L424,176.24 L426,176.45 L428,176.44 L430,176.96 L432,176.80 L434,176.60 L436,176.81 L438,177.23 L440,177.02 L442,176.69 L444,177.21 L446,177.26 L448,177.17 L450,176.86 L452,176.75 L454,177.31 L456,177.31 L458,177.24 L460,177.19 L462,177.03 L464,177.33 L466,177.20 L468,177.32 L470,176.69 L472,176.90 L474,177.40 L476,176.72 L478,177.41 L480,177.19 L482,176.71 L484,176.86 L486,176.91 L488,177.15 L490,177.34 L492,176.99 L494,177.41 L496,177.33 L498,177.19 L500,177.47 L502,177.18 L504,176.87 L506,176.95 L508,177.10 L510,176.99 L512,177.13 L514,177.39 L516,177.02 L518,177.18 L520,176.91 L522,176.84 L524,177.28 L526,177.23 L528,177.15 L530,177.48 L532,177.69 L534,177.36 L536,177.30 L538,177.44 L540,177.56 L542,177.62 L544,177.94 L546,178.15 L548,178.48 L550,178.77 L552,178.70 L554,179.48 L556,179.59 L558,179.66 L560,180.08 L562,180.51 L564,181.34 L566,181.66 L568,181.99 L570,182.31 L572,182.32 L574,182.34 L576,182.35 L576,182.35 L574,182.34 L572,182.32 L570,182.31 L568,182.61 L566,182.91 L564,183.21 L562,183.71 L560,184.19 L558,184.55 L556,185.02 L554,185.19 L552,185.74 L550,186.10 L548,185.65 L546,186.19 L544,186.44 L542,186.28 L540,186.52 L538,186.94 L536,186.23 L534,186.67 L532,186.40 L530,186.94 L528,187.10 L526,186.80 L524,186.51 L522,186.92 L520,186.93 L518,187.05 L516,186.86 L514,186.94 L512,187.06 L510,186.79 L508,186.68 L506,187.08 L504,186.47 L502,186.82 L500,186.56 L498,186.84 L496,186.30 L494,186.96 L492,186.43 L490,186.17 L488,186.32 L486,186.39 L484,186.06 L482,186.36 L480,186.34 L478,186.54 L476,186.24 L474,186.15 L472,186.10 L470,186.49 L468,186.63 L466,186.28 L464,186.02 L462,186.46 L460,186.12 L458,185.95 L456,185.87 L454,186.37 L452,186.37 L450,186.21 L448,186.06 L446,186.12 L444,185.83 L442,186.40 L440,185.89 L438,186.04 L436,186.11 L434,186.04 L432,185.69 L430,185.47 L428,185.60 L426,185.19 L424,185.68 L422,185.23 L420,185.55 L418,185.01 L416,185.02 L414,184.85 L412,184.91 L410,184.65 L408,184.34 L406,184.74 L404,184.22 L402,184.03 L400,183.91 L398,183.88 L396,183.68 L394,183.56 L392,183.19 L390,182.56 L388,182.62 L386,182.16 L384,181.28 L382,181.80 L380,181.76 L378,181.57 L376,180.95 L374,181.40 L372,181.15 L370,180.55 L368,180.45 L366,180.34 L364,180.24 L362,180.15 L360,180.05 L358,179.98 L356,179.91 L354,179.84 L352,179.77 L350,179.70 L348,179.63 L346,179.56 L344,179.42 L342,179.20 L340,178.99 L338,178.77Z" fill="#ffd01a" filter="url(#bl05)"/>
<path d="M386,179.81 L388,179.28 L390,178.18 L392,177.83 L394,177.78 L396,177.84 L398,177.79 L400,177.71 L402,177.36 L404,177.59 L406,177.68 L408,177.21 L410,177.25 L412,177.60 L414,177.14 L416,177.48 L418,177.73 L420,178.15 L422,178.36 L424,178.48 L426,178.51 L428,178.95 L430,178.71 L432,178.86 L434,178.79 L436,179.03 L438,178.82 L440,179.07 L442,179.25 L444,179.27 L446,179.33 L448,179.12 L450,179.38 L452,179.14 L454,179.33 L456,179.13 L458,179.13 L460,179.10 L462,178.91 L464,179.43 L466,178.93 L468,179.15 L470,179.10 L472,178.88 L474,178.62 L476,178.75 L478,178.57 L480,178.09 L482,178.47 L484,178.12 L486,178.10 L488,178.45 L490,178.09 L492,178.03 L494,177.87 L496,178.22 L498,177.81 L500,178.08 L502,178.08 L504,177.82 L506,178.33 L508,177.90 L510,177.94 L512,178.10 L514,177.77 L516,178.06 L518,177.98 L520,177.93 L522,177.86 L524,178.26 L526,178.19 L528,178.27 L530,178.26 L532,178.16 L534,178.55 L536,178.30 L538,178.62 L540,179.07 L542,179.72 L544,180.10 L546,180.33 L548,181.43 L550,181.94 L550,182.44 L548,182.93 L546,183.81 L544,184.38 L542,184.59 L540,185.07 L538,185.54 L536,185.76 L534,185.83 L532,185.96 L530,185.56 L528,186.01 L526,186.15 L524,185.99 L522,185.74 L520,185.93 L518,185.71 L516,185.79 L514,186.19 L512,185.96 L510,185.95 L508,185.99 L506,186.02 L504,185.81 L502,185.77 L500,185.74 L498,185.74 L496,185.64 L494,185.65 L492,185.33 L490,185.57 L488,185.40 L486,185.55 L484,185.11 L482,185.12 L480,184.86 L478,185.12 L476,185.02 L474,184.69 L472,184.34 L470,184.43 L468,184.39 L466,184.23 L464,184.02 L462,184.03 L460,184.08 L458,183.99 L456,184.04 L454,184.14 L452,184.29 L450,183.74 L448,184.03 L446,183.69 L444,183.71 L442,184.10 L440,183.94 L438,184.07 L436,183.71 L434,183.37 L432,183.52 L430,183.56 L428,183.69 L426,183.64 L424,183.26 L422,183.15 L420,183.18 L418,183.72 L416,183.68 L414,183.68 L412,183.44 L410,183.28 L408,183.53 L406,183.03 L404,183.38 L402,182.70 L400,183.01 L398,182.40 L396,182.18 L394,182.46 L392,181.80 L390,181.48 L388,180.42 L386,179.81Z" fill="#fffbe8" filter="url(#bl05)"/>
<g filter="url(#bl05)"><rect x="433.4" y="179.0" width="4.3" height="2" fill="#fffbe8"/><rect x="457.1" y="183.4" width="4.2" height="2" fill="#fffbe8"/><rect x="428.8" y="181.8" width="4.1" height="2" fill="#fffbe8"/><rect x="445.7" y="183.7" width="2.8" height="2" fill="#fffbe8"/><rect x="468.4" y="182.8" width="2.0" height="2" fill="#fffbe8"/><rect x="425.7" y="181.8" width="4.5" height="2" fill="#fffbe8"/><rect x="428.6" y="180.2" width="4.2" height="2" fill="#fffbe8"/><rect x="432.5" y="183.1" width="3.5" height="2" fill="#fffbe8"/><rect x="427.7" y="180.4" width="3.7" height="2" fill="#fffbe8"/><rect x="444.7" y="182.4" width="2.4" height="2" fill="#fffbe8"/><rect x="460.9" y="180.9" width="3.9" height="2" fill="#fffbe8"/><rect x="453.3" y="181.2" width="3.2" height="2" fill="#fffbe8"/><rect x="460.4" y="183.9" width="4.4" height="2" fill="#fffbe8"/><rect x="450.5" y="180.5" width="2.2" height="2" fill="#fffbe8"/></g>
<ellipse cx="592.5" cy="182.4" rx="2.6" ry="2" fill="#f0901a" filter="url(#bl05)"/>
<ellipse cx="318.5" cy="191.5" rx="2.5" ry="1.3" fill="#9040a8" opacity="0.7" filter="url(#bl05)"/>
<ellipse cx="331.5" cy="177.5" rx="2" ry="1.2" fill="#6a28a8" opacity="0.7" filter="url(#bl05)"/>
<ellipse cx="729" cy="190.5" rx="2" ry="1.5" fill="#7a2aa0" opacity="0.7" filter="url(#bl05)"/>
<ellipse cx="522" cy="753" rx="12" ry="1.4" fill="#5a2a9a" opacity="0.55" filter="url(#bl1)"/>
<rect x="560" y="183" width="1" height="1" fill="#f8c040"/><rect x="445" y="183" width="1" height="1" fill="#d07010"/><rect x="535" y="183" width="1" height="1" fill="#a05010"/><rect x="490" y="187" width="1" height="1" fill="#e09010"/><rect x="453" y="183" width="1" height="1" fill="#f8c040"/><rect x="524" y="179" width="1" height="1" fill="#f0b020"/><rect x="436" y="177" width="1" height="1" fill="#a05010"/><rect x="433" y="178" width="1" height="1" fill="#d07010"/><rect x="437" y="178" width="1" height="1" fill="#f8c040"/><rect x="411" y="185" width="1" height="1" fill="#f8c040"/><rect x="508" y="186" width="1" height="1" fill="#a05010"/><rect x="481" y="182" width="1" height="1" fill="#f0b020"/><rect x="529" y="179" width="1" height="1" fill="#e09010"/><rect x="441" y="177" width="1" height="1" fill="#f0b020"/><rect x="469" y="179" width="1" height="1" fill="#a05010"/><rect x="491" y="177" width="1" height="1" fill="#f0b020"/><rect x="468" y="178" width="1" height="1" fill="#a05010"/><rect x="524" y="179" width="1" height="1" fill="#f8c040"/><rect x="479" y="179" width="1" height="1" fill="#f8c040"/><rect x="443" y="182" width="1" height="1" fill="#e09010"/><rect x="419" y="178" width="1" height="1" fill="#e09010"/><rect x="530" y="180" width="1" height="1" fill="#f8c040"/><rect x="487" y="181" width="1" height="1" fill="#f8c040"/><rect x="539" y="180" width="1" height="1" fill="#f0b020"/><rect x="452" y="178" width="1" height="1" fill="#f0b020"/><rect x="527" y="179" width="1" height="1" fill="#f8c040"/><rect x="390" y="179" width="1" height="1" fill="#f8c040"/><rect x="389" y="177" width="1" height="1" fill="#f8c040"/><rect x="473" y="182" width="1" height="1" fill="#a05010"/><rect x="552" y="181" width="1" height="1" fill="#d07010"/><rect x="555" y="184" width="1" height="1" fill="#f8c040"/><rect x="558" y="181" width="1" height="1" fill="#d07010"/><rect x="446" y="186" width="1" height="1" fill="#f0b020"/><rect x="400" y="176" width="1" height="1" fill="#f8c040"/><rect x="452" y="184" width="1" height="1" fill="#f0b020"/><rect x="555" y="185" width="1" height="1" fill="#d07010"/><rect x="540" y="183" width="1" height="1" fill="#d07010"/><rect x="512" y="178" width="1" height="1" fill="#a05010"/><rect x="487" y="183" width="1" height="1" fill="#f8c040"/><rect x="456" y="181" width="1" height="1" fill="#e09010"/><rect x="452" y="179" width="1" height="1" fill="#e09010"/><rect x="416" y="185" width="1" height="1" fill="#a05010"/><rect x="396" y="180" width="1" height="1" fill="#d07010"/><rect x="536" y="178" width="1" height="1" fill="#f8c040"/><rect x="513" y="183" width="1" height="1" fill="#f0b020"/><rect x="395" y="177" width="1" height="1" fill="#d07010"/><rect x="554" y="183" width="1" height="1" fill="#a05010"/><rect x="491" y="181" width="1" height="1" fill="#d07010"/><rect x="470" y="180" width="1" height="1" fill="#f0b020"/><rect x="407" y="180" width="1" height="1" fill="#e09010"/><rect x="464" y="185" width="1" height="1" fill="#d07010"/><rect x="469" y="186" width="1" height="1" fill="#d07010"/><rect x="413" y="184" width="1" height="1" fill="#d07010"/><rect x="553" y="185" width="1" height="1" fill="#e09010"/><rect x="525" y="187" width="1" height="1" fill="#f0b020"/><rect x="537" y="183" width="1" height="1" fill="#f0b020"/><rect x="560" y="181" width="1" height="1" fill="#e09010"/><rect x="471" y="183" width="1" height="1" fill="#e09010"/><rect x="445" y="184" width="1" height="1" fill="#e09010"/><rect x="513" y="183" width="1" height="1" fill="#e09010"/><rect x="464" y="178" width="1" height="1" fill="#f0b020"/><rect x="459" y="178" width="1" height="1" fill="#a05010"/><rect x="488" y="180" width="1" height="1" fill="#e09010"/><rect x="432" y="178" width="1" height="1" fill="#f0b020"/><rect x="548" y="179" width="1" height="1" fill="#f8c040"/><rect x="395" y="183" width="1" height="1" fill="#e09010"/><rect x="486" y="185" width="1" height="1" fill="#d07010"/><rect x="431" y="178" width="1" height="1" fill="#a05010"/><rect x="463" y="179" width="1" height="1" fill="#e09010"/><rect x="552" y="179" width="1" height="1" fill="#a05010"/><rect x="460" y="178" width="1" height="1" fill="#a05010"/><rect x="411" y="182" width="1" height="1" fill="#f0b020"/><rect x="530" y="180" width="1" height="1" fill="#e09010"/><rect x="465" y="184" width="1" height="1" fill="#f8c040"/><rect x="437" y="180" width="1" height="1" fill="#d07010"/><rect x="549" y="180" width="1" height="1" fill="#f8c040"/><rect x="418" y="184" width="1" height="1" fill="#f8c040"/><rect x="524" y="184" width="1" height="1" fill="#e09010"/><rect x="493" y="185" width="1" height="1" fill="#f8c040"/><rect x="517" y="185" width="1" height="1" fill="#e09010"/><rect x="422" y="182" width="1" height="1" fill="#e09010"/><rect x="490" y="179" width="1" height="1" fill="#d07010"/><rect x="510" y="182" width="1" height="1" fill="#d07010"/><rect x="478" y="180" width="1" height="1" fill="#a05010"/><rect x="537" y="186" width="1" height="1" fill="#f0b020"/><rect x="401" y="179" width="1" height="1" fill="#f0b020"/><rect x="409" y="182" width="1" height="1" fill="#e09010"/><rect x="418" y="184" width="1" height="1" fill="#a05010"/><rect x="392" y="181" width="1" height="1" fill="#f8c040"/><rect x="492" y="177" width="1" height="1" fill="#f8c040"/>
</g>
<rect x="3" y="3" width="311" height="45" fill="#fff"/>
<g font-family="Liberation Mono" font-size="11.67" fill="#111" shape-rendering="auto">
<text x="4.5" y="15">Screen Capture Time: 2025-11-27 03:11:09 UTC</text>
<text x="4.5" y="29">143048017 Hz</text>
<text x="4.5" y="43">Config = V8</text>
</g>
<rect x="5" y="53" width="99" height="39" fill="#fff"/>
<rect x="5" y="53" width="98" height="15" fill="url(#cbar)"/>
<path d="M8.5 68v5 M13.5 68v5 M17.5 68v5 M22.5 68v5 M26.5 68v8 M31.5 68v5 M35.5 68v5 M40.5 68v5 M44.5 68v5 M48.5 68v11 M53.5 68v5 M57.5 68v5 M62.5 68v5 M66.5 68v5 M71.5 68v8 M75.5 68v5 M79.5 68v5 M84.5 68v5 M88.5 68v5 M93.5 68v11 M97.5 68v5 M102.5 68v5" stroke="#000" stroke-width="1"/>
<g font-family="Liberation Sans" font-size="11" fill="#000" shape-rendering="auto">
<text x="5" y="90">-80 dB -60</text>
<text x="84.5" y="90">-40</text>
</g>
<g font-family="Liberation Sans" font-size="11" fill="#fff" shape-rendering="auto">
<text transform="translate(71,778) rotate(-90)">2025-11-27 03:10:00</text>
<text transform="translate(186,778) rotate(-90)">2025-11-27 03:10:10</text>
<text transform="translate(285,778) rotate(-90)">2025-11-27 03:10:20</text>
<text transform="translate(399,778) rotate(-90)">2025-11-27 03:10:30</text>
<text transform="translate(514,778) rotate(-90)">2025-11-27 03:10:40</text>
<text transform="translate(628,778) rotate(-90)">2025-11-27 03:10:50</text>
<text transform="translate(743,778) rotate(-90)">2025-11-27 03:11:00</text>
</g>
<path d="M74.5 760v20 M189.5 760v20 M288.5 760v20 M402.5 760v20 M517.5 760v20 M631.5 760v20 M746.5 760v20" stroke="#fff" stroke-width="1"/>
<rect x="818" y="1" width="42" height="782" fill="#fff"/>
<path d="M818 2.5h8 M818 10.5h8 M818 18.5h11 M818 26.5h8 M818 34.5h8 M818 41.5h8 M818 49.5h8 M818 57.5h8 M818 65.5h8 M818 73.5h8 M818 80.5h8 M818 88.5h8 M818 96.5h26 M818 104.5h8 M818 112.5h8 M818 119.5h8 M818 127.5h8 M818 135.5h8 M818 143.5h8 M818 151.5h8 M818 158.5h8 M818 166.5h8 M818 174.5h11 M818 182.5h8 M818 190.5h8 M818 197.5h8 M818 205.5h8 M818 213.5h8 M818 221.5h8 M818 229.5h8 M818 236.5h8 M818 244.5h8 M818 252.5h26 M818 260.5h8 M818 268.5h8 M818 275.5h8 M818 283.5h8 M818 291.5h8 M818 299.5h8 M818 307.5h8 M818 314.5h8 M818 322.5h8 M818 330.5h11 M818 338.5h8 M818 346.5h8 M818 353.5h8 M818 361.5h8 M818 369.5h8 M818 377.5h8 M818 385.5h8 M818 392.5h8 M818 400.5h8 M818 408.5h26 M818 416.5h8 M818 424.5h8 M818 431.5h8 M818 439.5h8 M818 447.5h8 M818 455.5h8 M818 463.5h8 M818 470.5h8 M818 478.5h8 M818 486.5h11 M818 494.5h8 M818 502.5h8 M818 509.5h8 M818 517.5h8 M818 525.5h8 M818 533.5h8 M818 541.5h8 M818 548.5h8 M818 556.5h8 M818 564.5h26 M818 572.5h8 M818 580.5h8 M818 587.5h8 M818 595.5h8 M818 603.5h8 M818 611.5h8 M818 619.5h8 M818 626.5h8 M818 634.5h8 M818 642.5h11 M818 650.5h8 M818 658.5h8 M818 665.5h8 M818 673.5h8 M818 681.5h8 M818 689.5h8 M818 697.5h8 M818 704.5h8 M818 712.5h8 M818 720.5h26 M818 728.5h8 M818 736.5h8 M818 743.5h8 M818 751.5h8 M818 759.5h8 M818 767.5h8 M818 775.5h8" stroke="#000" stroke-width="1"/>
<path d="M823 8 L839.5 17 V772 L823 782" stroke="#1a1a9a" stroke-width="1" fill="none" shape-rendering="auto"/>
<g font-family="Liberation Mono" font-size="11.4" fill="#4a4a4a" shape-rendering="auto">
<text transform="translate(849,65.1) rotate(90)">143050400</text>
<text transform="translate(849,221.1) rotate(90)">143050200</text>
<text transform="translate(849,377.1) rotate(90)">143050000</text>
<text transform="translate(849,533.1) rotate(90)">143049800</text>
<text transform="translate(849,678.8) rotate(90)">143049600 Hz</text>
</g>
<rect x="860" y="1" width="80" height="781" fill="#000"/>
<rect x="860" y="11" width="80" height="766" fill="#555"/>
<g><rect x="860" y="12" width="4" height="1" fill="#020208"/><rect x="860" y="13" width="5" height="1" fill="#020208"/><rect x="860" y="14" width="5" height="1" fill="#000"/><rect x="860" y="15" width="8" height="1" fill="#060638"/><rect x="860" y="16" width="12" height="1" fill="#08085e"/><rect x="860" y="17" width="8" height="1" fill="#0a0a6a"/><rect x="860" y="18" width="10" height="1" fill="#0c0c76"/><rect x="860" y="19" width="8" height="1" fill="#04042a"/><rect x="860" y="20" width="3" height="1" fill="#060638"/><rect x="860" y="21" width="5" height="1" fill="#000"/><rect x="860" y="22" width="13" height="1" fill="#0c0c76"/><rect x="860" y="23" width="8" height="1" fill="#0c0c76"/><rect x="860" y="24" width="9" height="1" fill="#04042a"/><rect x="860" y="25" width="8" height="1" fill="#060638"/><rect x="860" y="26" width="4" height="1" fill="#000"/><rect x="860" y="27" width="7" height="1" fill="#010104"/><rect x="860" y="28" width="13" height="1" fill="#020208"/><rect x="860" y="29" width="7" height="1" fill="#020208"/><rect x="860" y="30" width="10" height="1" fill="#010104"/><rect x="860" y="31" width="15" height="1" fill="#020208"/><rect x="860" y="32" width="15" height="1" fill="#000"/><rect x="860" y="33" width="11" height="1" fill="#000"/><rect x="860" y="34" width="15" height="1" fill="#010104"/><rect x="860" y="35" width="19" height="1" fill="#0a0a6a"/><rect x="860" y="36" width="24" height="1" fill="#08085e"/><rect x="860" y="37" width="11" height="1" fill="#0a0a6a"/><rect x="860" y="38" width="17" height="1" fill="#0a0a6a"/><rect x="860" y="39" width="25" height="1" fill="#08085e"/><rect x="860" y="40" width="17" height="1" fill="#020208"/><rect x="860" y="41" width="27" height="1" fill="#08085e"/><rect x="860" y="42" width="30" height="1" fill="#0c0c76"/><rect x="860" y="43" width="14" height="1" fill="#08085e"/><rect x="860" y="44" width="17" height="1" fill="#08085e"/><rect x="860" y="45" width="19" height="1" fill="#0c0c76"/><rect x="860" y="46" width="11" height="1" fill="#0a0a6a"/><rect x="860" y="47" width="14" height="1" fill="#060638"/><rect x="860" y="48" width="17" height="1" fill="#000"/><rect x="860" y="49" width="10" height="1" fill="#020208"/><rect x="860" y="50" width="13" height="1" fill="#000"/><rect x="860" y="51" width="11" height="1" fill="#000"/><rect x="860" y="52" width="11" height="1" fill="#020208"/><rect x="860" y="53" width="7" height="1" fill="#0a0a6a"/><rect x="860" y="54" width="5" height="1" fill="#000"/><rect x="860" y="55" width="18" height="1" fill="#010104"/><rect x="860" y="56" width="15" height="1" fill="#000"/><rect x="860" y="57" width="18" height="1" fill="#000"/><rect x="860" y="58" width="24" height="1" fill="#7a7a7a"/><rect x="860" y="58" width="16" height="1" fill="#000"/><rect x="860" y="59" width="8" height="1" fill="#0a0a6a"/><rect x="860" y="60" width="16" height="1" fill="#7a7a7a"/><rect x="860" y="60" width="12" height="1" fill="#010104"/><rect x="860" y="61" width="20" height="1" fill="#0c0c76"/><rect x="860" y="62" width="10" height="1" fill="#0a0a6a"/><rect x="860" y="63" width="16" height="1" fill="#0a0a6a"/><rect x="860" y="64" width="26" height="1" fill="#7a7a7a"/><rect x="860" y="64" width="21" height="1" fill="#04042a"/><rect x="860" y="65" width="15" height="1" fill="#000"/><rect x="860" y="66" width="20" height="1" fill="#000"/><rect x="860" y="67" width="19" height="1" fill="#000"/><rect x="860" y="68" width="16" height="1" fill="#020208"/><rect x="860" y="69" width="12" height="1" fill="#000"/><rect x="860" y="70" width="16" height="1" fill="#7a7a7a"/><rect x="860" y="70" width="10" height="1" fill="#000"/><rect x="860" y="71" width="20" height="1" fill="#020208"/><rect x="860" y="72" width="21" height="1" fill="#000"/><rect x="860" y="73" width="9" height="1" fill="#020208"/><rect x="860" y="74" width="19" height="1" fill="#08085e"/><rect x="860" y="75" width="18" height="1" fill="#0a0a6a"/><rect x="860" y="76" width="17" height="1" fill="#04042a"/><rect x="860" y="77" width="18" height="1" fill="#060638"/><rect x="860" y="78" width="16" height="1" fill="#060638"/><rect x="860" y="79" width="14" height="1" fill="#060638"/><rect x="860" y="80" width="13" height="1" fill="#010104"/><rect x="860" y="81" width="7" height="1" fill="#020208"/><rect x="860" y="82" width="20" height="1" fill="#7a7a7a"/><rect x="860" y="82" width="16" height="1" fill="#0a0a6a"/><rect x="860" y="83" width="17" height="1" fill="#0a0a6a"/><rect x="860" y="84" width="19" height="1" fill="#08085e"/><rect x="860" y="85" width="22" height="1" fill="#08085e"/><rect x="860" y="86" width="17" height="1" fill="#000"/><rect x="860" y="87" width="20" height="1" fill="#020208"/><rect x="860" y="88" width="9" height="1" fill="#000"/><rect x="860" y="89" width="7" height="1" fill="#000"/><rect x="860" y="90" width="15" height="1" fill="#010104"/><rect x="860" y="91" width="8" height="1" fill="#020208"/><rect x="860" y="92" width="21" height="1" fill="#010104"/><rect x="860" y="93" width="5" height="1" fill="#060638"/><rect x="860" y="94" width="24" height="1" fill="#7a7a7a"/><rect x="860" y="94" width="18" height="1" fill="#060638"/><rect x="860" y="95" width="14" height="1" fill="#060638"/><rect x="860" y="96" width="15" height="1" fill="#000"/><rect x="860" y="97" width="11" height="1" fill="#020208"/><rect x="860" y="98" width="17" height="1" fill="#060638"/><rect x="860" y="99" width="18" height="1" fill="#010104"/><rect x="860" y="100" width="11" height="1" fill="#000"/><rect x="860" y="101" width="9" height="1" fill="#04042a"/><rect x="860" y="102" width="15" height="1" fill="#060638"/><rect x="860" y="103" width="13" height="1" fill="#010104"/><rect x="860" y="104" width="14" height="1" fill="#020208"/><rect x="860" y="105" width="18" height="1" fill="#020208"/><rect x="860" y="106" width="16" height="1" fill="#010104"/><rect x="860" y="107" width="20" height="1" fill="#7a7a7a"/><rect x="860" y="107" width="12" height="1" fill="#000"/><rect x="860" y="108" width="7" height="1" fill="#08085e"/><rect x="860" y="109" width="16" height="1" fill="#000"/><rect x="860" y="110" width="27" height="1" fill="#0c0c76"/><rect x="860" y="111" width="10" height="1" fill="#7a7a7a"/><rect x="860" y="111" width="7" height="1" fill="#060638"/><rect x="860" y="112" width="15" height="1" fill="#020208"/><rect x="860" y="113" width="11" height="1" fill="#08085e"/><rect x="860" y="114" width="17" height="1" fill="#000"/><rect x="860" y="115" width="10" height="1" fill="#000"/><rect x="860" y="116" width="14" height="1" fill="#000"/><rect x="860" y="117" width="8" height="1" fill="#010104"/><rect x="860" y="118" width="14" height="1" fill="#000"/><rect x="860" y="119" width="14" height="1" fill="#04042a"/><rect x="860" y="120" width="13" height="1" fill="#060638"/><rect x="860" y="121" width="19" height="1" fill="#0a0a6a"/><rect x="860" y="122" width="17" height="1" fill="#010104"/><rect x="860" y="123" width="13" height="1" fill="#020208"/><rect x="860" y="124" width="18" height="1" fill="#7a7a7a"/><rect x="860" y="124" width="14" height="1" fill="#0c0c76"/><rect x="860" y="125" width="13" height="1" fill="#000"/><rect x="860" y="126" width="6" height="1" fill="#08085e"/><rect x="860" y="127" width="16" height="1" fill="#08085e"/><rect x="860" y="128" width="13" height="1" fill="#010104"/><rect x="860" y="129" width="17" height="1" fill="#010104"/><rect x="860" y="130" width="19" height="1" fill="#010104"/><rect x="860" y="131" width="16" height="1" fill="#7a7a7a"/><rect x="860" y="131" width="14" height="1" fill="#020208"/><rect x="860" y="132" width="16" height="1" fill="#000"/><rect x="860" y="133" width="8" height="1" fill="#000"/><rect x="860" y="134" width="9" height="1" fill="#020208"/><rect x="860" y="135" width="18" height="1" fill="#010104"/><rect x="860" y="136" width="10" height="1" fill="#010104"/><rect x="860" y="137" width="19" height="1" fill="#020208"/><rect x="860" y="138" width="12" height="1" fill="#020208"/><rect x="860" y="139" width="9" height="1" fill="#020208"/><rect x="860" y="140" width="9" height="1" fill="#020208"/><rect x="860" y="141" width="15" height="1" fill="#010104"/><rect x="860" y="142" width="19" height="1" fill="#010104"/><rect x="860" y="143" width="11" height="1" fill="#020208"/><rect x="860" y="144" width="20" height="1" fill="#010104"/><rect x="860" y="145" width="9" height="1" fill="#000"/><rect x="860" y="146" width="15" height="1" fill="#010104"/><rect x="860" y="147" width="11" height="1" fill="#010104"/><rect x="860" y="148" width="15" height="1" fill="#010104"/><rect x="860" y="149" width="34" height="1" fill="#7a7a7a"/><rect x="860" y="149" width="29" height="1" fill="#08085e"/><rect x="860" y="150" width="18" height="1" fill="#0a0a6a"/><rect x="860" y="151" width="8" height="1" fill="#000"/><rect x="860" y="152" width="12" height="1" fill="#020208"/><rect x="860" y="153" width="9" height="1" fill="#020208"/><rect x="860" y="154" width="9" height="1" fill="#000"/><rect x="860" y="155" width="14" height="1" fill="#000"/><rect x="860" y="156" width="18" height="1" fill="#060638"/><rect x="860" y="157" width="20" height="1" fill="#010104"/><rect x="860" y="158" width="11" height="1" fill="#020208"/><rect x="860" y="159" width="16" height="1" fill="#000"/><rect x="860" y="160" width="17" height="1" fill="#000"/><rect x="860" y="161" width="9" height="1" fill="#000"/><rect x="860" y="162" width="14" height="1" fill="#000"/><rect x="860" y="163" width="11" height="1" fill="#020208"/><rect x="860" y="164" width="17" height="1" fill="#000"/><rect x="860" y="165" width="4" height="1" fill="#010104"/><rect x="860" y="166" width="8" height="1" fill="#010104"/><rect x="860" y="167" width="12" height="1" fill="#020208"/><rect x="860" y="168" width="18" height="1" fill="#04042a"/><rect x="860" y="169" width="14" height="1" fill="#04042a"/><rect x="860" y="170" width="20" height="1" fill="#060638"/><rect x="860" y="171" width="15" height="1" fill="#060638"/><rect x="860" y="172" width="23" height="1" fill="#04042a"/><rect x="860" y="173" width="11" height="1" fill="#060638"/><rect x="860" y="174" width="17" height="1" fill="#060638"/><rect x="860" y="175" width="16" height="1" fill="#010104"/><rect x="860" y="176" width="14" height="1" fill="#010104"/><rect x="860" y="177" width="14" height="1" fill="#000"/><rect x="860" y="178" width="30" height="1" fill="#020208"/><rect x="860" y="179" width="12" height="1" fill="#0a0a6a"/><rect x="860" y="180" width="22" height="1" fill="#08085e"/><rect x="860" y="181" width="18" height="1" fill="#010104"/><rect x="860" y="182" width="15" height="1" fill="#0c0c76"/><rect x="860" y="183" width="30" height="1" fill="#7a7a7a"/><rect x="860" y="183" width="27" height="1" fill="#08085e"/><rect x="860" y="184" width="27" height="1" fill="#08085e"/><rect x="860" y="185" width="26" height="1" fill="#08085e"/><rect x="860" y="186" width="11" height="1" fill="#0c0c76"/><rect x="860" y="187" width="12" height="1" fill="#020208"/><rect x="860" y="188" width="17" height="1" fill="#000"/><rect x="860" y="189" width="9" height="1" fill="#000"/><rect x="860" y="190" width="10" height="1" fill="#000"/><rect x="860" y="191" width="15" height="1" fill="#000"/><rect x="860" y="192" width="12" height="1" fill="#010104"/><rect x="860" y="193" width="21" height="1" fill="#020208"/><rect x="860" y="194" width="17" height="1" fill="#0c0c76"/><rect x="860" y="195" width="21" height="1" fill="#000"/><rect x="860" y="196" width="4" height="1" fill="#010104"/><rect x="860" y="197" width="4" height="1" fill="#010104"/><rect x="860" y="198" width="9" height="1" fill="#000"/><rect x="860" y="199" width="14" height="1" fill="#010104"/><rect x="860" y="200" width="13" height="1" fill="#010104"/><rect x="860" y="201" width="10" height="1" fill="#0a0a6a"/><rect x="860" y="202" width="11" height="1" fill="#0a0a6a"/><rect x="860" y="203" width="19" height="1" fill="#08085e"/><rect x="860" y="204" width="33" height="1" fill="#7a7a7a"/><rect x="860" y="204" width="26" height="1" fill="#0a0a6a"/><rect x="860" y="205" width="29" height="1" fill="#08085e"/><rect x="860" y="206" width="26" height="1" fill="#0c0c76"/><rect x="860" y="207" width="9" height="1" fill="#0c0c76"/><rect x="860" y="208" width="27" height="1" fill="#0c0c76"/><rect x="860" y="209" width="16" height="1" fill="#000"/><rect x="860" y="210" width="22" height="1" fill="#7a7a7a"/><rect x="860" y="210" width="15" height="1" fill="#000"/><rect x="860" y="211" width="16" height="1" fill="#010104"/><rect x="860" y="212" width="7" height="1" fill="#000"/><rect x="860" y="213" width="17" height="1" fill="#010104"/><rect x="860" y="214" width="15" height="1" fill="#010104"/><rect x="860" y="215" width="14" height="1" fill="#060638"/><rect x="860" y="216" width="9" height="1" fill="#020208"/><rect x="860" y="217" width="17" height="1" fill="#060638"/><rect x="860" y="218" width="11" height="1" fill="#04042a"/><rect x="860" y="219" width="19" height="1" fill="#060638"/><rect x="860" y="220" width="29" height="1" fill="#7a7a7a"/><rect x="860" y="220" width="22" height="1" fill="#060638"/><rect x="860" y="221" width="18" height="1" fill="#08085e"/><rect x="860" y="222" width="20" height="1" fill="#0c0c76"/><rect x="860" y="223" width="15" height="1" fill="#0c0c76"/><rect x="860" y="224" width="19" height="1" fill="#04042a"/><rect x="860" y="225" width="9" height="1" fill="#060638"/><rect x="860" y="226" width="13" height="1" fill="#04042a"/><rect x="860" y="227" width="29" height="1" fill="#0c0c76"/><rect x="860" y="228" width="19" height="1" fill="#0c0c76"/><rect x="860" y="229" width="30" height="1" fill="#0c0c76"/><rect x="860" y="230" width="13" height="1" fill="#020208"/><rect x="860" y="231" width="15" height="1" fill="#08085e"/><rect x="860" y="232" width="8" height="1" fill="#020208"/><rect x="860" y="233" width="12" height="1" fill="#010104"/><rect x="860" y="234" width="13" height="1" fill="#020208"/><rect x="860" y="235" width="16" height="1" fill="#060638"/><rect x="860" y="236" width="13" height="1" fill="#04042a"/><rect x="860" y="237" width="14" height="1" fill="#020208"/><rect x="860" y="238" width="14" height="1" fill="#060638"/><rect x="860" y="239" width="5" height="1" fill="#08085e"/><rect x="860" y="240" width="14" height="1" fill="#010104"/><rect x="860" y="241" width="13" height="1" fill="#000"/><rect x="860" y="242" width="11" height="1" fill="#020208"/><rect x="860" y="243" width="8" height="1" fill="#000"/><rect x="860" y="244" width="22" height="1" fill="#08085e"/><rect x="860" y="245" width="21" height="1" fill="#0c0c76"/><rect x="860" y="246" width="17" height="1" fill="#08085e"/><rect x="860" y="247" width="18" height="1" fill="#0a0a6a"/><rect x="860" y="248" width="19" height="1" fill="#0a0a6a"/><rect x="860" y="249" width="19" height="1" fill="#0a0a6a"/><rect x="860" y="250" width="30" height="1" fill="#0a0a6a"/><rect x="860" y="251" width="26" height="1" fill="#7a7a7a"/><rect x="860" y="251" width="20" height="1" fill="#0c0c76"/><rect x="860" y="252" width="6" height="1" fill="#04042a"/><rect x="860" y="253" width="16" height="1" fill="#04042a"/><rect x="860" y="254" width="18" height="1" fill="#7a7a7a"/><rect x="860" y="254" width="13" height="1" fill="#04042a"/><rect x="860" y="255" width="22" height="1" fill="#04042a"/><rect x="860" y="256" width="18" height="1" fill="#000"/><rect x="860" y="257" width="16" height="1" fill="#020208"/><rect x="860" y="258" width="7" height="1" fill="#000"/><rect x="860" y="259" width="15" height="1" fill="#020208"/><rect x="860" y="260" width="16" height="1" fill="#04042a"/><rect x="860" y="261" width="18" height="1" fill="#020208"/><rect x="860" y="262" width="11" height="1" fill="#000"/><rect x="860" y="263" width="9" height="1" fill="#000"/><rect x="860" y="264" width="20" height="1" fill="#7a7a7a"/><rect x="860" y="264" width="12" height="1" fill="#020208"/><rect x="860" y="265" width="6" height="1" fill="#060638"/><rect x="860" y="266" width="20" height="1" fill="#060638"/><rect x="860" y="267" width="9" height="1" fill="#04042a"/><rect x="860" y="268" width="14" height="1" fill="#0a0a6a"/><rect x="860" y="269" width="25" height="1" fill="#08085e"/><rect x="860" y="270" width="12" height="1" fill="#020208"/><rect x="860" y="271" width="12" height="1" fill="#000"/><rect x="860" y="272" width="17" height="1" fill="#0a0a6a"/><rect x="860" y="273" width="22" height="1" fill="#0a0a6a"/><rect x="860" y="274" width="9" height="1" fill="#010104"/><rect x="860" y="275" width="12" height="1" fill="#020208"/><rect x="860" y="276" width="17" height="1" fill="#7a7a7a"/><rect x="860" y="276" width="15" height="1" fill="#020208"/><rect x="860" y="277" width="11" height="1" fill="#010104"/><rect x="860" y="278" width="12" height="1" fill="#000"/><rect x="860" y="279" width="20" height="1" fill="#020208"/><rect x="860" y="280" width="24" height="1" fill="#7a7a7a"/><rect x="860" y="280" width="20" height="1" fill="#04042a"/><rect x="860" y="281" width="16" height="1" fill="#04042a"/><rect x="860" y="282" width="19" height="1" fill="#060638"/><rect x="860" y="283" width="19" height="1" fill="#04042a"/><rect x="860" y="284" width="30" height="1" fill="#0a0a6a"/><rect x="860" y="285" width="17" height="1" fill="#010104"/><rect x="860" y="286" width="13" height="1" fill="#04042a"/><rect x="860" y="287" width="16" height="1" fill="#060638"/><rect x="860" y="288" width="15" height="1" fill="#020208"/><rect x="860" y="289" width="10" height="1" fill="#010104"/><rect x="860" y="290" width="13" height="1" fill="#020208"/><rect x="860" y="291" width="17" height="1" fill="#0c0c76"/><rect x="860" y="292" width="16" height="1" fill="#060638"/><rect x="860" y="293" width="29" height="1" fill="#7a7a7a"/><rect x="860" y="293" width="21" height="1" fill="#08085e"/><rect x="860" y="294" width="8" height="1" fill="#020208"/><rect x="860" y="295" width="11" height="1" fill="#020208"/><rect x="860" y="296" width="8" height="1" fill="#020208"/><rect x="860" y="297" width="15" height="1" fill="#000"/><rect x="860" y="298" width="12" height="1" fill="#010104"/><rect x="860" y="299" width="13" height="1" fill="#000"/><rect x="860" y="300" width="5" height="1" fill="#000"/><rect x="860" y="301" width="12" height="1" fill="#060638"/><rect x="860" y="302" width="9" height="1" fill="#0c0c76"/><rect x="860" y="303" width="22" height="1" fill="#08085e"/><rect x="860" y="304" width="13" height="1" fill="#08085e"/><rect x="860" y="305" width="21" height="1" fill="#0c0c76"/><rect x="860" y="306" width="24" height="1" fill="#7a7a7a"/><rect x="860" y="306" width="22" height="1" fill="#060638"/><rect x="860" y="307" width="15" height="1" fill="#020208"/><rect x="860" y="308" width="14" height="1" fill="#020208"/><rect x="860" y="309" width="15" height="1" fill="#020208"/><rect x="860" y="310" width="4" height="1" fill="#010104"/><rect x="860" y="311" width="7" height="1" fill="#000"/><rect x="860" y="312" width="13" height="1" fill="#060638"/><rect x="860" y="313" width="9" height="1" fill="#060638"/><rect x="860" y="314" width="20" height="1" fill="#04042a"/><rect x="860" y="315" width="13" height="1" fill="#060638"/><rect x="860" y="316" width="16" height="1" fill="#04042a"/><rect x="860" y="317" width="5" height="1" fill="#020208"/><rect x="860" y="318" width="17" height="1" fill="#000"/><rect x="860" y="319" width="6" height="1" fill="#010104"/><rect x="860" y="320" width="10" height="1" fill="#020208"/><rect x="860" y="321" width="14" height="1" fill="#000"/><rect x="860" y="322" width="15" height="1" fill="#020208"/><rect x="860" y="323" width="9" height="1" fill="#010104"/><rect x="860" y="324" width="15" height="1" fill="#020208"/><rect x="860" y="325" width="16" height="1" fill="#020208"/><rect x="860" y="326" width="19" height="1" fill="#020208"/><rect x="860" y="327" width="10" height="1" fill="#000"/><rect x="860" y="328" width="4" height="1" fill="#000"/><rect x="860" y="329" width="30" height="1" fill="#7a7a7a"/><rect x="860" y="329" width="25" height="1" fill="#0c0c76"/><rect x="860" y="330" width="25" height="1" fill="#0a0a6a"/><rect x="860" y="331" width="19" height="1" fill="#08085e"/><rect x="860" y="332" width="11" height="1" fill="#020208"/><rect x="860" y="333" width="24" height="1" fill="#7a7a7a"/><rect x="860" y="333" width="21" height="1" fill="#020208"/><rect x="860" y="334" width="16" height="1" fill="#020208"/><rect x="860" y="335" width="8" height="1" fill="#010104"/><rect x="860" y="336" width="13" height="1" fill="#020208"/><rect x="860" y="337" width="19" height="1" fill="#010104"/><rect x="860" y="338" width="10" height="1" fill="#000"/><rect x="860" y="339" width="13" height="1" fill="#010104"/><rect x="860" y="340" width="17" height="1" fill="#7a7a7a"/><rect x="860" y="340" width="12" height="1" fill="#010104"/><rect x="860" y="341" width="24" height="1" fill="#7a7a7a"/><rect x="860" y="341" width="17" height="1" fill="#08085e"/><rect x="860" y="342" width="21" height="1" fill="#7a7a7a"/><rect x="860" y="342" width="15" height="1" fill="#08085e"/><rect x="860" y="343" width="23" height="1" fill="#08085e"/><rect x="860" y="344" width="15" height="1" fill="#7a7a7a"/><rect x="860" y="344" width="10" height="1" fill="#0a0a6a"/><rect x="860" y="345" width="9" height="1" fill="#020208"/><rect x="860" y="346" width="17" height="1" fill="#7a7a7a"/><rect x="860" y="346" width="14" height="1" fill="#010104"/><rect x="860" y="347" width="17" height="1" fill="#0c0c76"/><rect x="860" y="348" width="15" height="1" fill="#08085e"/><rect x="860" y="349" width="18" height="1" fill="#0a0a6a"/><rect x="860" y="350" width="23" height="1" fill="#0c0c76"/><rect x="860" y="351" width="16" height="1" fill="#000"/><rect x="860" y="352" width="8" height="1" fill="#08085e"/><rect x="860" y="353" width="18" height="1" fill="#0a0a6a"/><rect x="860" y="354" width="27" height="1" fill="#0c0c76"/><rect x="860" y="355" width="16" height="1" fill="#010104"/><rect x="860" y="356" width="16" height="1" fill="#010104"/><rect x="860" y="357" width="15" height="1" fill="#0a0a6a"/><rect x="860" y="358" width="9" height="1" fill="#0a0a6a"/><rect x="860" y="359" width="18" height="1" fill="#08085e"/><rect x="860" y="360" width="22" height="1" fill="#08085e"/><rect x="860" y="361" width="25" height="1" fill="#7a7a7a"/><rect x="860" y="361" width="22" height="1" fill="#08085e"/><rect x="860" y="362" width="15" height="1" fill="#0a0a6a"/><rect x="860" y="363" width="17" height="1" fill="#020208"/><rect x="860" y="364" width="15" height="1" fill="#020208"/><rect x="860" y="365" width="21" height="1" fill="#04042a"/><rect x="860" y="366" width="20" height="1" fill="#04042a"/><rect x="860" y="367" width="12" height="1" fill="#04042a"/><rect x="860" y="368" width="21" height="1" fill="#060638"/><rect x="860" y="369" width="17" height="1" fill="#010104"/><rect x="860" y="370" width="21" height="1" fill="#060638"/><rect x="860" y="371" width="12" height="1" fill="#04042a"/><rect x="860" y="372" width="10" height="1" fill="#060638"/><rect x="860" y="373" width="18" height="1" fill="#7a7a7a"/><rect x="860" y="373" width="13" height="1" fill="#000"/><rect x="860" y="374" width="17" height="1" fill="#7a7a7a"/><rect x="860" y="374" width="9" height="1" fill="#020208"/><rect x="860" y="375" width="15" height="1" fill="#020208"/><rect x="860" y="376" width="16" height="1" fill="#020208"/><rect x="860" y="377" width="8" height="1" fill="#000"/><rect x="860" y="378" width="19" height="1" fill="#000"/><rect x="860" y="379" width="31" height="1" fill="#0a0a6a"/><rect x="860" y="380" width="16" height="1" fill="#020208"/><rect x="860" y="381" width="16" height="1" fill="#020208"/><rect x="860" y="382" width="7" height="1" fill="#04042a"/><rect x="860" y="383" width="9" height="1" fill="#04042a"/><rect x="860" y="384" width="14" height="1" fill="#020208"/><rect x="860" y="385" width="19" height="1" fill="#010104"/><rect x="860" y="386" width="13" height="1" fill="#010104"/><rect x="860" y="387" width="21" height="1" fill="#000"/><rect x="860" y="388" width="9" height="1" fill="#000"/><rect x="860" y="389" width="16" height="1" fill="#060638"/><rect x="860" y="390" width="11" height="1" fill="#060638"/><rect x="860" y="391" width="20" height="1" fill="#060638"/><rect x="860" y="392" width="14" height="1" fill="#060638"/><rect x="860" y="393" width="17" height="1" fill="#010104"/><rect x="860" y="394" width="21" height="1" fill="#010104"/><rect x="860" y="395" width="26" height="1" fill="#000"/><rect x="860" y="396" width="10" height="1" fill="#020208"/><rect x="860" y="397" width="14" height="1" fill="#010104"/><rect x="860" y="398" width="15" height="1" fill="#04042a"/><rect x="860" y="399" width="16" height="1" fill="#060638"/><rect x="860" y="400" width="17" height="1" fill="#7a7a7a"/><rect x="860" y="400" width="12" height="1" fill="#060638"/><rect x="860" y="401" width="12" height="1" fill="#020208"/><rect x="860" y="402" width="17" height="1" fill="#010104"/><rect x="860" y="403" width="12" height="1" fill="#000"/><rect x="860" y="404" width="15" height="1" fill="#010104"/><rect x="860" y="405" width="14" height="1" fill="#020208"/><rect x="860" y="406" width="8" height="1" fill="#010104"/><rect x="860" y="407" width="17" height="1" fill="#010104"/><rect x="860" y="408" width="15" height="1" fill="#020208"/><rect x="860" y="409" width="9" height="1" fill="#010104"/><rect x="860" y="410" width="21" height="1" fill="#04042a"/><rect x="860" y="411" width="14" height="1" fill="#020208"/><rect x="860" y="412" width="14" height="1" fill="#020208"/><rect x="860" y="413" width="10" height="1" fill="#000"/><rect x="860" y="414" width="10" height="1" fill="#020208"/><rect x="860" y="415" width="21" height="1" fill="#08085e"/><rect x="860" y="416" width="4" height="1" fill="#010104"/><rect x="860" y="417" width="7" height="1" fill="#000"/><rect x="860" y="418" width="9" height="1" fill="#020208"/><rect x="860" y="419" width="5" height="1" fill="#000"/><rect x="860" y="420" width="10" height="1" fill="#010104"/><rect x="860" y="421" width="26" height="1" fill="#060638"/><rect x="860" y="422" width="23" height="1" fill="#060638"/><rect x="860" y="423" width="10" height="1" fill="#010104"/><rect x="860" y="424" width="25" height="1" fill="#7a7a7a"/><rect x="860" y="424" width="18" height="1" fill="#08085e"/><rect x="860" y="425" width="19" height="1" fill="#04042a"/><rect x="860" y="426" width="18" height="1" fill="#08085e"/><rect x="860" y="427" width="16" height="1" fill="#0a0a6a"/><rect x="860" y="428" width="17" height="1" fill="#020208"/><rect x="860" y="429" width="15" height="1" fill="#020208"/><rect x="860" y="430" width="8" height="1" fill="#010104"/><rect x="860" y="431" width="5" height="1" fill="#010104"/><rect x="860" y="432" width="26" height="1" fill="#08085e"/><rect x="860" y="433" width="16" height="1" fill="#000"/><rect x="860" y="434" width="30" height="1" fill="#0c0c76"/><rect x="860" y="435" width="22" height="1" fill="#0c0c76"/><rect x="860" y="436" width="16" height="1" fill="#0c0c76"/><rect x="860" y="437" width="12" height="1" fill="#010104"/><rect x="860" y="438" width="9" height="1" fill="#000"/><rect x="860" y="439" width="19" height="1" fill="#7a7a7a"/><rect x="860" y="439" width="15" height="1" fill="#04042a"/><rect x="860" y="440" width="14" height="1" fill="#060638"/><rect x="860" y="441" width="10" height="1" fill="#020208"/><rect x="860" y="442" width="13" height="1" fill="#010104"/><rect x="860" y="443" width="19" height="1" fill="#0c0c76"/><rect x="860" y="444" width="11" height="1" fill="#020208"/><rect x="860" y="445" width="16" height="1" fill="#010104"/><rect x="860" y="446" width="20" height="1" fill="#08085e"/><rect x="860" y="447" width="10" height="1" fill="#08085e"/><rect x="860" y="448" width="4" height="1" fill="#010104"/><rect x="860" y="449" width="17" height="1" fill="#020208"/><rect x="860" y="450" width="16" height="1" fill="#0a0a6a"/><rect x="860" y="451" width="8" height="1" fill="#020208"/><rect x="860" y="452" width="21" height="1" fill="#0a0a6a"/><rect x="860" y="453" width="18" height="1" fill="#000"/><rect x="860" y="454" width="17" height="1" fill="#0a0a6a"/><rect x="860" y="455" width="14" height="1" fill="#010104"/><rect x="860" y="456" width="16" height="1" fill="#000"/><rect x="860" y="457" width="13" height="1" fill="#010104"/><rect x="860" y="458" width="28" height="1" fill="#7a7a7a"/><rect x="860" y="458" width="23" height="1" fill="#010104"/><rect x="860" y="459" width="8" height="1" fill="#08085e"/><rect x="860" y="460" width="25" height="1" fill="#0c0c76"/><rect x="860" y="461" width="15" height="1" fill="#04042a"/><rect x="860" y="462" width="18" height="1" fill="#04042a"/><rect x="860" y="463" width="21" height="1" fill="#04042a"/><rect x="860" y="464" width="12" height="1" fill="#010104"/><rect x="860" y="465" width="8" height="1" fill="#010104"/><rect x="860" y="466" width="18" height="1" fill="#000"/><rect x="860" y="467" width="8" height="1" fill="#000"/><rect x="860" y="468" width="9" height="1" fill="#020208"/><rect x="860" y="469" width="15" height="1" fill="#7a7a7a"/><rect x="860" y="469" width="10" height="1" fill="#020208"/><rect x="860" y="470" width="15" height="1" fill="#060638"/><rect x="860" y="471" width="11" height="1" fill="#020208"/><rect x="860" y="472" width="12" height="1" fill="#020208"/><rect x="860" y="473" width="23" height="1" fill="#7a7a7a"/><rect x="860" y="473" width="15" height="1" fill="#010104"/><rect x="860" y="474" width="19" height="1" fill="#7a7a7a"/><rect x="860" y="474" width="15" height="1" fill="#0c0c76"/><rect x="860" y="475" width="10" height="1" fill="#020208"/><rect x="860" y="476" width="16" height="1" fill="#020208"/><rect x="860" y="477" width="17" height="1" fill="#020208"/><rect x="860" y="478" width="9" height="1" fill="#020208"/><rect x="860" y="479" width="15" height="1" fill="#000"/><rect x="860" y="480" width="9" height="1" fill="#020208"/><rect x="860" y="481" width="14" height="1" fill="#010104"/><rect x="860" y="482" width="20" height="1" fill="#020208"/><rect x="860" y="483" width="17" height="1" fill="#010104"/><rect x="860" y="484" width="16" height="1" fill="#020208"/><rect x="860" y="485" width="20" height="1" fill="#020208"/><rect x="860" y="486" width="13" height="1" fill="#010104"/><rect x="860" y="487" width="17" height="1" fill="#010104"/><rect x="860" y="488" width="15" height="1" fill="#010104"/><rect x="860" y="489" width="13" height="1" fill="#7a7a7a"/><rect x="860" y="489" width="6" height="1" fill="#010104"/><rect x="860" y="490" width="7" height="1" fill="#020208"/><rect x="860" y="491" width="11" height="1" fill="#010104"/><rect x="860" y="492" width="4" height="1" fill="#010104"/><rect x="860" y="493" width="15" height="1" fill="#08085e"/><rect x="860" y="494" width="13" height="1" fill="#060638"/><rect x="860" y="495" width="22" height="1" fill="#0a0a6a"/><rect x="860" y="496" width="14" height="1" fill="#000"/><rect x="860" y="497" width="12" height="1" fill="#020208"/><rect x="860" y="498" width="11" height="1" fill="#020208"/><rect x="860" y="499" width="19" height="1" fill="#7a7a7a"/><rect x="860" y="499" width="13" height="1" fill="#010104"/><rect x="860" y="500" width="20" height="1" fill="#020208"/><rect x="860" y="501" width="14" height="1" fill="#020208"/><rect x="860" y="502" width="21" height="1" fill="#0a0a6a"/><rect x="860" y="503" width="14" height="1" fill="#010104"/><rect x="860" y="504" width="10" height="1" fill="#020208"/><rect x="860" y="505" width="16" height="1" fill="#000"/><rect x="860" y="506" width="21" height="1" fill="#7a7a7a"/><rect x="860" y="506" width="19" height="1" fill="#060638"/><rect x="860" y="507" width="18" height="1" fill="#060638"/><rect x="860" y="508" width="25" height="1" fill="#020208"/><rect x="860" y="509" width="11" height="1" fill="#020208"/><rect x="860" y="510" width="22" height="1" fill="#020208"/><rect x="860" y="511" width="21" height="1" fill="#7a7a7a"/><rect x="860" y="511" width="18" height="1" fill="#010104"/><rect x="860" y="512" width="17" height="1" fill="#000"/><rect x="860" y="513" width="5" height="1" fill="#010104"/><rect x="860" y="514" width="12" height="1" fill="#020208"/><rect x="860" y="515" width="8" height="1" fill="#0a0a6a"/><rect x="860" y="516" width="26" height="1" fill="#08085e"/><rect x="860" y="517" width="26" height="1" fill="#7a7a7a"/><rect x="860" y="517" width="23" height="1" fill="#0c0c76"/><rect x="860" y="518" width="6" height="1" fill="#010104"/><rect x="860" y="519" width="21" height="1" fill="#020208"/><rect x="860" y="520" width="16" height="1" fill="#010104"/><rect x="860" y="521" width="17" height="1" fill="#060638"/><rect x="860" y="522" width="20" height="1" fill="#060638"/><rect x="860" y="523" width="13" height="1" fill="#060638"/><rect x="860" y="524" width="17" height="1" fill="#000"/><rect x="860" y="525" width="20" height="1" fill="#0a0a6a"/><rect x="860" y="526" width="30" height="1" fill="#0a0a6a"/><rect x="860" y="527" width="26" height="1" fill="#0c0c76"/><rect x="860" y="528" width="19" height="1" fill="#0a0a6a"/><rect x="860" y="529" width="22" height="1" fill="#0c0c76"/><rect x="860" y="530" width="28" height="1" fill="#0c0c76"/><rect x="860" y="531" width="16" height="1" fill="#0a0a6a"/><rect x="860" y="532" width="10" height="1" fill="#0c0c76"/><rect x="860" y="533" width="26" height="1" fill="#0c0c76"/><rect x="860" y="534" width="11" height="1" fill="#04042a"/><rect x="860" y="535" width="13" height="1" fill="#060638"/><rect x="860" y="536" width="13" height="1" fill="#04042a"/><rect x="860" y="537" width="10" height="1" fill="#060638"/><rect x="860" y="538" width="22" height="1" fill="#7a7a7a"/><rect x="860" y="538" width="16" height="1" fill="#020208"/><rect x="860" y="539" width="13" height="1" fill="#010104"/><rect x="860" y="540" width="18" height="1" fill="#020208"/><rect x="860" y="541" width="6" height="1" fill="#020208"/><rect x="860" y="542" width="9" height="1" fill="#020208"/><rect x="860" y="543" width="16" height="1" fill="#020208"/><rect x="860" y="544" width="25" height="1" fill="#020208"/><rect x="860" y="545" width="16" height="1" fill="#000"/><rect x="860" y="546" width="20" height="1" fill="#7a7a7a"/><rect x="860" y="546" width="12" height="1" fill="#020208"/><rect x="860" y="547" width="11" height="1" fill="#010104"/><rect x="860" y="548" width="16" height="1" fill="#020208"/><rect x="860" y="549" width="15" height="1" fill="#04042a"/><rect x="860" y="550" width="16" height="1" fill="#04042a"/><rect x="860" y="551" width="8" height="1" fill="#04042a"/><rect x="860" y="552" width="17" height="1" fill="#010104"/><rect x="860" y="553" width="7" height="1" fill="#010104"/><rect x="860" y="554" width="12" height="1" fill="#000"/><rect x="860" y="555" width="8" height="1" fill="#010104"/><rect x="860" y="556" width="16" height="1" fill="#000"/><rect x="860" y="557" width="13" height="1" fill="#010104"/><rect x="860" y="558" width="11" height="1" fill="#020208"/><rect x="860" y="559" width="15" height="1" fill="#020208"/><rect x="860" y="560" width="9" height="1" fill="#020208"/><rect x="860" y="561" width="11" height="1" fill="#020208"/><rect x="860" y="562" width="20" height="1" fill="#000"/><rect x="860" y="563" width="18" height="1" fill="#000"/><rect x="860" y="564" width="9" height="1" fill="#020208"/><rect x="860" y="565" width="8" height="1" fill="#010104"/><rect x="860" y="566" width="18" height="1" fill="#08085e"/><rect x="860" y="567" width="9" height="1" fill="#000"/><rect x="860" y="568" width="11" height="1" fill="#010104"/><rect x="860" y="569" width="8" height="1" fill="#010104"/><rect x="860" y="570" width="21" height="1" fill="#060638"/><rect x="860" y="571" width="15" height="1" fill="#060638"/><rect x="860" y="572" width="15" height="1" fill="#0c0c76"/><rect x="860" y="573" width="13" height="1" fill="#020208"/><rect x="860" y="574" width="16" height="1" fill="#000"/><rect x="860" y="575" width="18" height="1" fill="#020208"/><rect x="860" y="576" width="14" height="1" fill="#020208"/><rect x="860" y="577" width="8" height="1" fill="#020208"/><rect x="860" y="578" width="14" height="1" fill="#020208"/><rect x="860" y="579" width="12" height="1" fill="#010104"/><rect x="860" y="580" width="9" height="1" fill="#060638"/><rect x="860" y="581" width="29" height="1" fill="#000"/><rect x="860" y="582" width="15" height="1" fill="#010104"/><rect x="860" y="583" width="7" height="1" fill="#020208"/><rect x="860" y="584" width="13" height="1" fill="#010104"/><rect x="860" y="585" width="15" height="1" fill="#020208"/><rect x="860" y="586" width="6" height="1" fill="#0a0a6a"/><rect x="860" y="587" width="12" height="1" fill="#000"/><rect x="860" y="588" width="15" height="1" fill="#020208"/><rect x="860" y="589" width="10" height="1" fill="#020208"/><rect x="860" y="590" width="9" height="1" fill="#010104"/><rect x="860" y="591" width="13" height="1" fill="#0a0a6a"/><rect x="860" y="592" width="19" height="1" fill="#060638"/><rect x="860" y="593" width="11" height="1" fill="#04042a"/><rect x="860" y="594" width="14" height="1" fill="#060638"/><rect x="860" y="595" width="16" height="1" fill="#04042a"/><rect x="860" y="596" width="14" height="1" fill="#04042a"/><rect x="860" y="597" width="19" height="1" fill="#020208"/><rect x="860" y="598" width="7" height="1" fill="#000"/><rect x="860" y="599" width="7" height="1" fill="#000"/><rect x="860" y="600" width="23" height="1" fill="#020208"/><rect x="860" y="601" width="19" height="1" fill="#0a0a6a"/><rect x="860" y="602" width="16" height="1" fill="#7a7a7a"/><rect x="860" y="602" width="10" height="1" fill="#0a0a6a"/><rect x="860" y="603" width="23" height="1" fill="#060638"/><rect x="860" y="604" width="11" height="1" fill="#000"/><rect x="860" y="605" width="13" height="1" fill="#000"/><rect x="860" y="606" width="16" height="1" fill="#0a0a6a"/><rect x="860" y="607" width="20" height="1" fill="#0a0a6a"/><rect x="860" y="608" width="17" height="1" fill="#0a0a6a"/><rect x="860" y="609" width="23" height="1" fill="#7a7a7a"/><rect x="860" y="609" width="17" height="1" fill="#020208"/><rect x="860" y="610" width="12" height="1" fill="#000"/><rect x="860" y="611" width="7" height="1" fill="#000"/><rect x="860" y="612" width="13" height="1" fill="#010104"/><rect x="860" y="613" width="7" height="1" fill="#000"/><rect x="860" y="614" width="7" height="1" fill="#010104"/><rect x="860" y="615" width="13" height="1" fill="#08085e"/><rect x="860" y="616" width="16" height="1" fill="#0c0c76"/><rect x="860" y="617" width="17" height="1" fill="#0a0a6a"/><rect x="860" y="618" width="11" height="1" fill="#08085e"/><rect x="860" y="619" width="19" height="1" fill="#0c0c76"/><rect x="860" y="620" width="24" height="1" fill="#0c0c76"/><rect x="860" y="621" width="13" height="1" fill="#0c0c76"/><rect x="860" y="622" width="16" height="1" fill="#000"/><rect x="860" y="623" width="14" height="1" fill="#010104"/><rect x="860" y="624" width="12" height="1" fill="#020208"/><rect x="860" y="625" width="11" height="1" fill="#000"/><rect x="860" y="626" width="15" height="1" fill="#010104"/><rect x="860" y="627" width="9" height="1" fill="#04042a"/><rect x="860" y="628" width="19" height="1" fill="#04042a"/><rect x="860" y="629" width="14" height="1" fill="#060638"/><rect x="860" y="630" width="11" height="1" fill="#04042a"/><rect x="860" y="631" width="9" height="1" fill="#04042a"/><rect x="860" y="632" width="6" height="1" fill="#060638"/><rect x="860" y="633" width="14" height="1" fill="#060638"/><rect x="860" y="634" width="19" height="1" fill="#060638"/><rect x="860" y="635" width="12" height="1" fill="#04042a"/><rect x="860" y="636" width="15" height="1" fill="#000"/><rect x="860" y="637" width="11" height="1" fill="#020208"/><rect x="860" y="638" width="13" height="1" fill="#000"/><rect x="860" y="639" width="13" height="1" fill="#000"/><rect x="860" y="640" width="15" height="1" fill="#020208"/><rect x="860" y="641" width="6" height="1" fill="#010104"/><rect x="860" y="642" width="16" height="1" fill="#000"/><rect x="860" y="643" width="8" height="1" fill="#020208"/><rect x="860" y="644" width="9" height="1" fill="#010104"/><rect x="860" y="645" width="14" height="1" fill="#000"/><rect x="860" y="646" width="15" height="1" fill="#060638"/><rect x="860" y="647" width="20" height="1" fill="#04042a"/><rect x="860" y="648" width="7" height="1" fill="#020208"/><rect x="860" y="649" width="11" height="1" fill="#020208"/><rect x="860" y="650" width="17" height="1" fill="#010104"/><rect x="860" y="651" width="25" height="1" fill="#000"/><rect x="860" y="652" width="21" height="1" fill="#020208"/><rect x="860" y="653" width="8" height="1" fill="#020208"/><rect x="860" y="654" width="19" height="1" fill="#000"/><rect x="860" y="655" width="19" height="1" fill="#020208"/><rect x="860" y="656" width="13" height="1" fill="#010104"/><rect x="860" y="657" width="17" height="1" fill="#010104"/><rect x="860" y="658" width="13" height="1" fill="#000"/><rect x="860" y="659" width="11" height="1" fill="#020208"/><rect x="860" y="660" width="4" height="1" fill="#000"/><rect x="860" y="661" width="22" height="1" fill="#08085e"/><rect x="860" y="662" width="21" height="1" fill="#08085e"/><rect x="860" y="663" width="20" height="1" fill="#7a7a7a"/><rect x="860" y="663" width="16" height="1" fill="#08085e"/><rect x="860" y="664" width="21" height="1" fill="#020208"/><rect x="860" y="665" width="10" height="1" fill="#010104"/><rect x="860" y="666" width="20" height="1" fill="#000"/><rect x="860" y="667" width="16" height="1" fill="#020208"/><rect x="860" y="668" width="7" height="1" fill="#7a7a7a"/><rect x="860" y="668" width="4" height="1" fill="#000"/><rect x="860" y="669" width="8" height="1" fill="#000"/><rect x="860" y="670" width="29" height="1" fill="#0a0a6a"/><rect x="860" y="671" width="29" height="1" fill="#0c0c76"/><rect x="860" y="672" width="14" height="1" fill="#0a0a6a"/><rect x="860" y="673" width="27" height="1" fill="#7a7a7a"/><rect x="860" y="673" width="21" height="1" fill="#0a0a6a"/><rect x="860" y="674" width="17" height="1" fill="#08085e"/><rect x="860" y="675" width="25" height="1" fill="#0c0c76"/><rect x="860" y="676" width="24" height="1" fill="#08085e"/><rect x="860" y="677" width="9" height="1" fill="#010104"/><rect x="860" y="678" width="8" height="1" fill="#020208"/><rect x="860" y="679" width="17" height="1" fill="#7a7a7a"/><rect x="860" y="679" width="12" height="1" fill="#000"/><rect x="860" y="680" width="14" height="1" fill="#010104"/><rect x="860" y="681" width="14" height="1" fill="#0a0a6a"/><rect x="860" y="682" width="17" height="1" fill="#000"/><rect x="860" y="683" width="4" height="1" fill="#010104"/><rect x="860" y="684" width="23" height="1" fill="#08085e"/><rect x="860" y="685" width="18" height="1" fill="#020208"/><rect x="860" y="686" width="21" height="1" fill="#010104"/><rect x="860" y="687" width="10" height="1" fill="#000"/><rect x="860" y="688" width="14" height="1" fill="#000"/><rect x="860" y="689" width="26" height="1" fill="#0c0c76"/><rect x="860" y="690" width="18" height="1" fill="#08085e"/><rect x="860" y="691" width="20" height="1" fill="#0a0a6a"/><rect x="860" y="692" width="9" height="1" fill="#0c0c76"/><rect x="860" y="693" width="29" height="1" fill="#0c0c76"/><rect x="860" y="694" width="29" height="1" fill="#0c0c76"/><rect x="860" y="695" width="16" height="1" fill="#08085e"/><rect x="860" y="696" width="20" height="1" fill="#0a0a6a"/><rect x="860" y="697" width="19" height="1" fill="#000"/><rect x="860" y="698" width="10" height="1" fill="#7a7a7a"/><rect x="860" y="698" width="4" height="1" fill="#08085e"/><rect x="860" y="699" width="31" height="1" fill="#0a0a6a"/><rect x="860" y="700" width="14" height="1" fill="#0a0a6a"/><rect x="860" y="701" width="13" height="1" fill="#000"/><rect x="860" y="702" width="15" height="1" fill="#04042a"/><rect x="860" y="703" width="16" height="1" fill="#060638"/><rect x="860" y="704" width="9" height="1" fill="#000"/><rect x="860" y="705" width="15" height="1" fill="#020208"/><rect x="860" y="706" width="10" height="1" fill="#0a0a6a"/><rect x="860" y="707" width="14" height="1" fill="#0a0a6a"/><rect x="860" y="708" width="21" height="1" fill="#0a0a6a"/><rect x="860" y="709" width="18" height="1" fill="#0a0a6a"/><rect x="860" y="710" width="8" height="1" fill="#010104"/><rect x="860" y="711" width="10" height="1" fill="#020208"/><rect x="860" y="712" width="15" height="1" fill="#000"/><rect x="860" y="713" width="21" height="1" fill="#08085e"/><rect x="860" y="714" width="19" height="1" fill="#08085e"/><rect x="860" y="715" width="14" height="1" fill="#000"/><rect x="860" y="716" width="10" height="1" fill="#000"/><rect x="860" y="717" width="8" height="1" fill="#020208"/><rect x="860" y="718" width="15" height="1" fill="#010104"/><rect x="860" y="719" width="10" height="1" fill="#020208"/><rect x="860" y="720" width="21" height="1" fill="#7a7a7a"/><rect x="860" y="720" width="16" height="1" fill="#010104"/><rect x="860" y="721" width="10" height="1" fill="#010104"/><rect x="860" y="722" width="12" height="1" fill="#020208"/><rect x="860" y="723" width="16" height="1" fill="#08085e"/><rect x="860" y="724" width="13" height="1" fill="#08085e"/><rect x="860" y="725" width="17" height="1" fill="#000"/><rect x="860" y="726" width="19" height="1" fill="#020208"/><rect x="860" y="727" width="9" height="1" fill="#020208"/><rect x="860" y="728" width="16" height="1" fill="#000"/><rect x="860" y="729" width="18" height="1" fill="#7a7a7a"/><rect x="860" y="729" width="12" height="1" fill="#010104"/><rect x="860" y="730" width="14" height="1" fill="#020208"/><rect x="860" y="731" width="16" height="1" fill="#0a0a6a"/><rect x="860" y="732" width="16" height="1" fill="#000"/><rect x="860" y="733" width="9" height="1" fill="#010104"/><rect x="860" y="734" width="8" height="1" fill="#000"/><rect x="860" y="735" width="11" height="1" fill="#010104"/><rect x="860" y="736" width="18" height="1" fill="#08085e"/><rect x="860" y="737" width="28" height="1" fill="#0c0c76"/><rect x="860" y="738" width="11" height="1" fill="#060638"/><rect x="860" y="739" width="18" height="1" fill="#060638"/><rect x="860" y="740" width="15" height="1" fill="#010104"/><rect x="860" y="741" width="11" height="1" fill="#04042a"/><rect x="860" y="742" width="15" height="1" fill="#010104"/><rect x="860" y="743" width="10" height="1" fill="#010104"/><rect x="860" y="744" width="16" height="1" fill="#04042a"/><rect x="860" y="745" width="5" height="1" fill="#060638"/><rect x="860" y="746" width="16" height="1" fill="#04042a"/><rect x="860" y="747" width="8" height="1" fill="#000"/><rect x="860" y="748" width="18" height="1" fill="#0c0c76"/><rect x="860" y="749" width="10" height="1" fill="#000"/><rect x="860" y="750" width="18" height="1" fill="#020208"/><rect x="860" y="751" width="12" height="1" fill="#010104"/><rect x="860" y="752" width="11" height="1" fill="#020208"/><rect x="860" y="753" width="15" height="1" fill="#000"/><rect x="860" y="754" width="20" height="1" fill="#7a7a7a"/><rect x="860" y="754" width="12" height="1" fill="#020208"/><rect x="860" y="755" width="13" height="1" fill="#000"/><rect x="860" y="756" width="17" height="1" fill="#0c0c76"/><rect x="860" y="757" width="10" height="1" fill="#0c0c76"/><rect x="860" y="758" width="17" height="1" fill="#08085e"/><rect x="860" y="759" width="26" height="1" fill="#08085e"/><rect x="860" y="760" width="12" height="1" fill="#0c0c76"/><rect x="860" y="761" width="16" height="1" fill="#0a0a6a"/><rect x="860" y="762" width="17" height="1" fill="#08085e"/><rect x="860" y="763" width="16" height="1" fill="#000"/><rect x="860" y="764" width="21" height="1" fill="#020208"/><rect x="860" y="765" width="16" height="1" fill="#000"/><rect x="860" y="766" width="19" height="1" fill="#0c0c76"/><rect x="860" y="767" width="25" height="1" fill="#0a0a6a"/><rect x="860" y="768" width="11" height="1" fill="#060638"/><rect x="860" y="769" width="14" height="1" fill="#08085e"/><rect x="860" y="770" width="22" height="1" fill="#08085e"/></g>
<path d="M860 18.5h80 M860 96.5h80 M860 174.5h80 M860 252.5h80 M860 330.5h80 M860 408.5h80 M860 486.5h80 M860 564.5h80 M860 642.5h80 M860 720.5h80" stroke="#9a9a9a" stroke-width="1"/>
<rect x="860" y="777" width="80" height="5" fill="#000"/>
<rect x="860" y="1" width="80" height="10" fill="#000"/>
<polyline points="860.0,1 860.0,3 860.2,5 860.4,7 860.7,9 860.9,11 862.0,13 864.0,15 866.0,17 868.0,19 869.8,21 871.4,23 873.0,25 874.2,27 875.4,29 876.2,31 876.8,33 877.2,35 876.6,37 876.6,39 878.0,41 875.7,43 877.4,45 875.7,47 878.4,49 877.7,51 878.6,53 877.1,55 877.8,57 877.3,59 876.9,61 877.6,63 876.5,65 877.2,67 878.1,69 877.5,71 877.2,73 879.3,75 877.5,77 877.0,79 877.6,81 877.1,83 877.2,85 877.2,87 879.1,89 877.5,91 877.6,93 878.0,95 879.1,97 877.3,99 877.0,101 879.5,103 876.3,105 877.2,107 878.0,109 879.3,111 876.7,113 875.6,115 878.0,117 877.1,119 877.2,121 877.9,123 877.7,125 877.7,127 877.2,129 878.5,131 878.7,133 877.5,135 877.1,137 878.1,139 877.9,141 876.7,143 877.1,145 878.3,147 877.4,149 877.2,151 877.7,153 877.5,155 877.5,157 876.0,159 878.9,161 877.7,163 876.8,165 878.3,167 878.0,168 880.0,171 882.0,174 890.0,175 902.0,176 910.0,177.5 918.0,179.5 923.0,182 917.0,184.5 912.0,186 904.0,187 897.0,188 890.0,189.5 885.0,192 882.0,196 880.0,200 878.0,204 877.9,207 876.1,209 876.4,211 876.5,213 879.0,215 876.8,217 877.3,219 877.3,221 878.0,223 877.9,225 877.7,227 876.5,229 875.0,231 877.6,233 877.7,235 878.5,237 877.4,239 877.0,241 877.8,243 876.3,245 876.7,247 876.7,249 877.7,251 879.2,253 878.1,255 878.4,257 877.7,259 877.7,261 877.1,263 877.3,265 875.6,267 876.5,269 876.5,271 878.2,273 878.0,275 878.4,277 878.7,279 877.3,281 878.3,283 879.1,285 877.5,287 878.4,289 877.4,291 876.2,293 877.6,295 876.8,297 877.6,299 877.1,301 877.8,303 875.8,305 879.2,307 878.6,309 877.2,311 876.8,313 877.5,315 878.0,317 877.8,319 877.8,321 875.9,323 876.6,325 878.6,327 877.7,329 876.3,331 876.8,333 876.3,335 876.7,337 878.4,339 877.3,341 878.4,343 877.7,345 876.3,347 877.0,349 879.4,351 876.9,353 876.6,355 878.5,357 877.6,359 877.5,361 878.7,363 876.1,365 877.8,367 876.6,369 876.4,371 876.8,373 878.4,375 877.4,377 876.0,379 876.6,381 878.7,383 878.3,385 876.6,387 879.5,389 877.2,391 876.5,393 877.4,395 878.3,397 878.8,399 878.3,401 877.2,403 877.0,405 876.3,407 877.4,409 877.0,411 877.7,413 876.5,415 877.1,417 876.8,419 876.5,421 876.5,423 876.7,425 876.5,427 878.0,429 877.6,431 876.4,433 877.9,435 877.7,437 878.7,439 877.3,441 877.3,443 876.9,445 877.6,447 877.9,449 877.6,451 877.3,453 878.0,455 877.6,457 877.7,459 876.7,461 877.7,463 876.7,465 876.8,467 877.6,469 879.2,471 878.3,473 877.5,475 877.4,477 878.3,479 878.6,481 878.5,483 877.3,485 877.7,487 877.2,489 877.3,491 876.8,493 877.3,495 875.7,497 876.5,499 877.8,501 876.7,503 877.9,505 876.4,507 877.2,509 877.8,511 876.7,513 876.9,515 879.5,517 876.9,519 876.9,521 877.0,523 877.5,525 877.5,527 878.3,529 878.1,531 877.2,533 877.2,535 876.3,537 876.3,539 876.9,541 878.1,543 877.6,545 878.2,547 878.3,549 877.4,551 879.2,553 877.1,555 877.0,557 877.1,559 878.4,561 877.4,563 876.9,565 877.9,567 878.4,569 877.4,571 877.3,573 878.4,575 878.3,577 878.3,579 876.9,581 877.7,583 877.8,585 876.0,587 878.5,589 877.6,591 877.2,593 879.4,595 877.6,597 876.9,599 877.4,601 878.0,603 878.2,605 877.5,607 876.8,609 876.9,611 876.8,613 876.6,615 877.5,617 877.1,619 877.5,621 876.8,623 876.8,625 877.3,627 877.2,629 878.4,631 876.8,633 877.7,635 877.5,637 876.4,639 878.1,641 877.6,643 875.8,645 878.0,647 878.3,649 876.8,651 878.9,653 877.6,655 876.6,657 878.0,659 877.2,661 876.4,663 875.7,665 877.7,667 876.9,669 878.0,671 877.8,673 877.1,675 877.1,677 878.9,679 878.9,681 878.1,683 877.2,685 876.7,687 877.2,689 878.9,691 877.9,693 877.3,695 876.5,697 877.6,699 876.8,701 877.5,703 878.1,705 878.4,707 877.6,709 877.2,711 877.7,713 879.0,715 877.8,717 876.4,719 878.8,721 877.7,723 880.3,725 877.1,727 877.4,729 877.3,731 877.8,733 877.0,735 876.3,737 875.9,739 877.4,741 877.1,743 877.0,745 879.2,747 878.1,749 878.4,751 877.1,753 877.7,755 877.3,757 877.3,759 878.1,761 876.8,763 876.2,765 875.3,767 874.0,769 871.5,771 869.0,773 867.2,775 865.5,777 863.0,779 860.5,781" fill="none" stroke="#c83c3c" stroke-width="1.4" opacity="0.9" shape-rendering="auto"/>
<path d="M860 750 A3.6 3.6 0 0 1 860 757.5" fill="none" stroke="#c83c3c" stroke-width="1.2" shape-rendering="auto"/>
<path d="M940 776 A3.5 3.5 0 0 0 936 782" fill="none" stroke="#3ce03c" stroke-width="1" shape-rendering="auto"/>
<polyline points="860.0,7 863.0,9 869.0,11 875.0,13 878.5,15 882.0,17 884.7,19 886.7,21 888.1,23 889.5,25 890.3,27 891.1,29 891.7,31 891.4,33 889.1,35 892.1,37 890.5,39 894.1,41 891.0,43 894.5,45 891.4,47 893.2,49 890.6,51 893.6,53 891.9,55 893.0,57 890.9,59 892.8,61 890.2,63 894.3,65 890.7,67 893.9,69 890.4,71 895.5,73 891.8,75 894.3,77 891.0,79 894.3,81 890.1,83 892.8,85 890.9,87 893.2,89 890.8,91 894.0,93 889.6,95 894.7,97 890.3,99 894.4,101 891.3,103 893.7,105 891.1,107 894.6,109 891.8,111 894.9,113 891.4,115 894.6,117 892.8,119 895.5,121 892.6,123 895.6,125 893.9,127 897.8,129 893.9,131 896.9,133 892.8,135 898.9,137 895.8,139 898.3,141 895.6,143 898.3,145 897.3,147 901.0,149 899.1,151 902.0,153 900.2,155 904.1,157 902.4,159 909.6,161 910.3,163 916.4,165 917.7,167 926.6,169 931.4,171 942.7,173 945.0,175 945.0,177 945.0,179 945.0,181 945.0,183 945.0,185 945.0,187 945.0,189 945.0,191 942.3,193 931.3,195 928.6,197 920.4,199 917.7,201 912.5,203 912.2,205 905.5,207 908.0,209 903.3,211 905.6,213 900.7,215 902.4,217 899.3,219 899.1,221 898.0,223 898.6,225 896.3,227 897.9,229 895.5,231 897.4,233 892.7,235 897.4,237 892.9,239 896.0,241 891.3,243 896.4,245 894.6,247 895.6,249 893.3,251 895.8,253 892.2,255 895.6,257 892.8,259 896.0,261 890.2,263 893.7,265 892.4,267 892.5,269 890.4,271 893.3,273 891.0,275 895.6,277 891.5,279 894.7,281 890.9,283 894.3,285 889.2,287 894.7,289 890.3,291 896.0,293 892.6,295 892.5,297 891.3,299 893.3,301 891.3,303 893.6,305 890.5,307 894.9,309 890.0,311 893.6,313 890.4,315 894.2,317 891.5,319 894.5,321 889.8,323 892.7,325 888.9,327 894.1,329 890.6,331 894.0,333 891.6,335 892.4,337 891.3,339 892.0,341 891.3,343 893.8,345 889.3,347 893.3,349 890.9,351 893.4,353 891.5,355 892.0,357 889.4,359 893.6,361 889.7,363 892.6,365 888.4,367 893.5,369 888.5,371 893.8,373 890.6,375 893.9,377 890.4,379 892.0,381 890.4,383 895.0,385 889.9,387 892.2,389 889.0,391 893.5,393 890.3,395 891.6,397 889.7,399 893.6,401 890.5,403 894.2,405 888.4,407 892.2,409 890.0,411 892.7,413 890.5,415 893.1,417 890.2,419 893.6,421 890.5,423 893.0,425 889.8,427 894.2,429 888.8,431 892.7,433 889.2,435 894.0,437 890.1,439 892.8,441 891.1,443 894.5,445 890.6,447 894.2,449 888.2,451 892.5,453 889.4,455 893.0,457 890.6,459 892.5,461 889.7,463 892.2,465 890.6,467 892.5,469 891.0,471 894.3,473 889.6,475 893.4,477 890.6,479 892.7,481 888.6,483 891.5,485 889.6,487 893.1,489 890.2,491 894.0,493 890.9,495 894.0,497 891.1,499 894.1,501 890.2,503 894.5,505 890.0,507 892.3,509 890.2,511 891.9,513 890.3,515 892.7,517 892.3,519 893.6,521 889.6,523 893.2,525 890.3,527 892.6,529 889.8,531 893.2,533 890.8,535 892.2,537 890.4,539 891.7,541 891.7,543 894.6,545 891.4,547 894.5,549 890.2,551 892.0,553 889.9,555 892.8,557 891.6,559 894.2,561 889.6,563 893.2,565 888.1,567 892.6,569 891.1,571 892.6,573 891.3,575 892.6,577 891.7,579 894.3,581 890.6,583 891.9,585 889.7,587 891.2,589 889.5,591 893.1,593 890.7,595 891.2,597 891.1,599 892.7,601 890.3,603 894.5,605 891.2,607 892.8,609 890.6,611 892.0,613 888.8,615 892.7,617 887.4,619 893.8,621 889.7,623 891.1,625 890.4,627 893.5,629 889.7,631 894.1,633 890.6,635 893.4,637 891.7,639 892.1,641 889.6,643 892.4,645 891.0,647 893.2,649 889.3,651 893.3,653 890.0,655 893.3,657 890.4,659 892.2,661 889.9,663 892.7,665 888.6,667 891.9,669 889.4,671 892.8,673 888.9,675 893.5,677 891.3,679 891.2,681 889.6,683 894.5,685 889.9,687 892.4,689 889.8,691 892.2,693 888.4,695 893.3,697 890.9,699 893.9,701 890.6,703 891.3,705 890.3,707 893.1,709 890.4,711 891.4,713 889.9,715 891.6,717 889.4,719 892.7,721 888.8,723 893.5,725 890.8,727 893.3,729 889.4,731 893.7,733 889.4,735 893.7,737 890.1,739 895.2,741 890.9,743 893.2,745 889.6,747 893.0,749 889.8,751 893.1,753 890.2,755 893.8,757 889.7,759 891.0,761 891.3,763 890.4,765 888.1,767 886.3,769 884.9,771 883.5,773 881.3,775 879.1,777 876.8,779 874.2,781" fill="none" stroke="#3ce03c" stroke-width="1" shape-rendering="crispEdges"/>
</svg>
</body></html>
